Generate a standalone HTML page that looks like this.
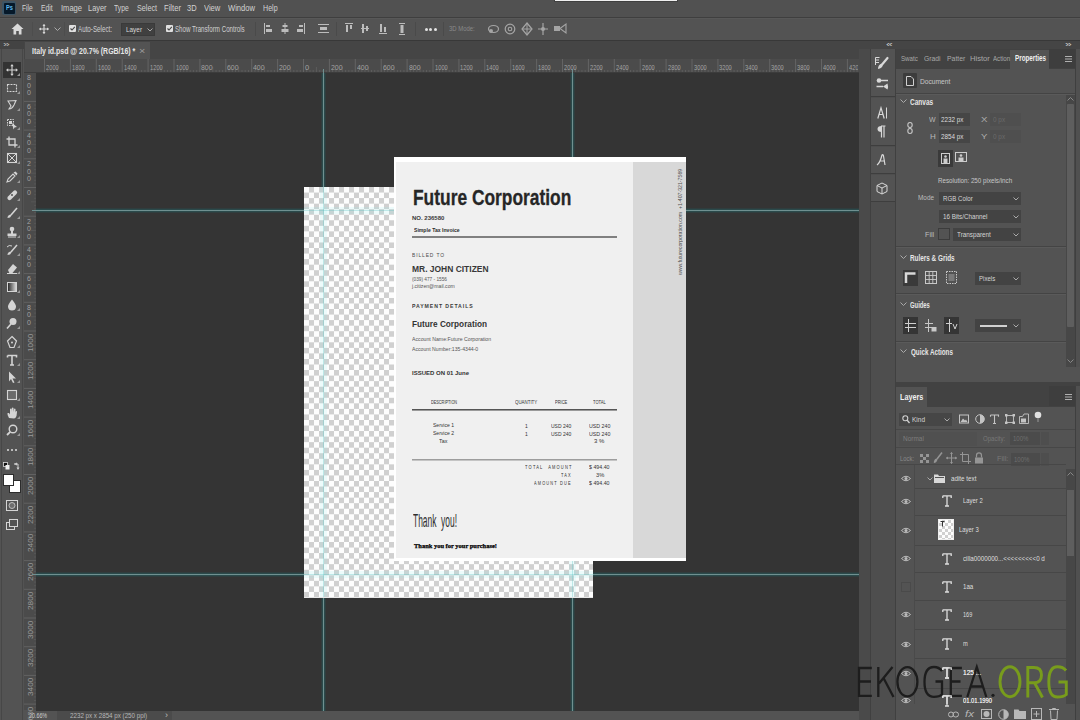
<!DOCTYPE html>
<html><head><meta charset="utf-8"><style>
*{margin:0;padding:0;box-sizing:border-box}
html,body{width:1080px;height:720px;overflow:hidden;background:#535353;font-family:"Liberation Sans",sans-serif}
.a{position:absolute}
.t{position:absolute;white-space:nowrap;line-height:1;transform-origin:0 50%}
svg{position:absolute;overflow:visible}
.checker{background:conic-gradient(#d0d0d0 25%,#fdfdfd 0 50%,#d0d0d0 0 75%,#fdfdfd 0);background-size:10px 11.1px}
</style></head><body>
<div class="a" style="left:0px;top:0px;width:1080px;height:17px;background:#515151;"></div>
<div class="a" style="left:0px;top:17px;width:1080px;height:1px;background:#3f3f3f;"></div>
<div class="a" style="left:0px;top:18px;width:1080px;height:22px;background:#535353;"></div>
<div class="a" style="left:0px;top:18px;width:1080px;height:1px;background:#585858;"></div>
<div class="a" style="left:0px;top:40px;width:1080px;height:1px;background:#383838;"></div>
<div class="a" style="left:0px;top:41px;width:1080px;height:8px;background:#454545;"></div>
<div class="a" style="left:24px;top:41px;width:835px;height:18px;background:#454545;"></div>
<div class="a" style="left:0px;top:49px;width:24px;height:671px;background:#535353;"></div>
<div class="a" style="left:0px;top:41px;width:24px;height:8px;background:#434343;"></div>
<div class="a" style="left:24px;top:59px;width:835px;height:14px;background:#4b4b4b;"></div>
<div class="a" style="left:24px;top:73px;width:12px;height:637px;background:#4b4b4b;"></div>
<div class="a" style="left:24px;top:72px;width:835px;height:1px;background:#3c3c3c;"></div>
<div class="a" style="left:36px;top:73px;width:823px;height:638px;background:#343434;"></div>
<div class="a" style="left:24px;top:711px;width:835px;height:9px;background:#535353;"></div>
<div class="a" style="left:859px;top:49px;width:11px;height:671px;background:#4a4a4a;"></div>
<div class="a" style="left:870px;top:49px;width:1px;height:671px;background:#404040;"></div>
<div class="a" style="left:871px;top:49px;width:24px;height:671px;background:#4e4e4e;"></div>
<div class="a" style="left:895px;top:49px;width:1px;height:671px;background:#404040;"></div>
<div class="a" style="left:896px;top:49px;width:184px;height:671px;background:#535353;"></div>
<div class="a" style="left:2px;top:1px;width:14px;height:14px;background:#3d5566;border-radius:2px"></div>
<div class="a" style="left:3.5px;top:2.5px;width:11px;height:11px;background:#06192a;border-radius:1px"></div>
<div class="t" style="left: 5.5px; top: 5.05px; font-size: 6.5px; color: rgb(92, 184, 240); font-weight: bold; font-family: &quot;Liberation Sans&quot;, sans-serif; transform: scaleX(0.875);">Ps</div>
<div class="t" style="left: 22px; top: 4px; font-size: 9px; color: rgb(210, 210, 210); font-weight: normal; font-family: &quot;Liberation Sans&quot;, sans-serif; transform: scaleX(0.733333);">File</div>
<div class="t" style="left: 41px; top: 4px; font-size: 9px; color: rgb(210, 210, 210); font-weight: normal; font-family: &quot;Liberation Sans&quot;, sans-serif; transform: scaleX(0.75);">Edit</div>
<div class="t" style="left: 61px; top: 4px; font-size: 9px; color: rgb(210, 210, 210); font-weight: normal; font-family: &quot;Liberation Sans&quot;, sans-serif; transform: scaleX(0.84);">Image</div>
<div class="t" style="left: 88px; top: 4px; font-size: 9px; color: rgb(210, 210, 210); font-weight: normal; font-family: &quot;Liberation Sans&quot;, sans-serif; transform: scaleX(0.826087);">Layer</div>
<div class="t" style="left: 114px; top: 4px; font-size: 9px; color: rgb(210, 210, 210); font-weight: normal; font-family: &quot;Liberation Sans&quot;, sans-serif; transform: scaleX(0.75);">Type</div>
<div class="t" style="left: 137px; top: 4px; font-size: 9px; color: rgb(210, 210, 210); font-weight: normal; font-family: &quot;Liberation Sans&quot;, sans-serif; transform: scaleX(0.8);">Select</div>
<div class="t" style="left: 164px; top: 4px; font-size: 9px; color: rgb(210, 210, 210); font-weight: normal; font-family: &quot;Liberation Sans&quot;, sans-serif; transform: scaleX(0.85);">Filter</div>
<div class="t" style="left: 187px; top: 4px; font-size: 9px; color: rgb(210, 210, 210); font-weight: normal; font-family: &quot;Liberation Sans&quot;, sans-serif; transform: scaleX(0.833333);">3D</div>
<div class="t" style="left: 204px; top: 4px; font-size: 9px; color: rgb(210, 210, 210); font-weight: normal; font-family: &quot;Liberation Sans&quot;, sans-serif; transform: scaleX(0.842105);">View</div>
<div class="t" style="left: 228px; top: 4px; font-size: 9px; color: rgb(210, 210, 210); font-weight: normal; font-family: &quot;Liberation Sans&quot;, sans-serif; transform: scaleX(0.84375);">Window</div>
<div class="t" style="left: 263px; top: 4px; font-size: 9px; color: rgb(210, 210, 210); font-weight: normal; font-family: &quot;Liberation Sans&quot;, sans-serif; transform: scaleX(0.789474);">Help</div>
<div class="a" style="left:554px;top:0px;width:124px;height:2px;background:#404040;"></div>
<div class="a" style="left:555px;top:0px;width:122px;height:1.3px;background:#f0f0f0;"></div>
<svg style="left:11px;top:23px;" width="13" height="12" viewBox="0 0 13 12"><path d="M6.5 0.5 L12.5 6 L10.5 6 L10.5 11.5 L7.8 11.5 L7.8 8 L5.2 8 L5.2 11.5 L2.5 11.5 L2.5 6 L0.5 6 Z" fill="#d9d9d9"></path></svg>
<div class="a" style="left:32px;top:22px;width:1px;height:14px;background:#4d4d4d;"></div>
<svg style="left:38.5px;top:23.5px;" width="10" height="10" viewBox="0 0 10 10"><path d="M5 0.5 V9.5 M0.5 5 H9.5" stroke="#d9d9d9" stroke-width="1.1"></path><path d="M5 0 L3.5 2 H6.5Z M5 10 L3.5 8 H6.5Z M0 5 L2 3.5 V6.5Z M10 5 L8 3.5 V6.5Z" fill="#d9d9d9"></path></svg>
<svg style="left:54px;top:27px;" width="7" height="5" viewBox="0 0 7 5"><path d="M0.5 0.5 L3.5 3.5 L6.5 0.5" stroke="#aaaaaa" fill="none" stroke-width="1"></path></svg>
<div class="a" style="left:64px;top:22px;width:1px;height:14px;background:#4d4d4d;"></div>
<div class="a" style="left:69px;top:25px;width:7px;height:7px;background:#e0e0e0;border-radius:1px"></div>
<svg style="left:69px;top:25px;" width="7" height="7" viewBox="0 0 7 7"><path d="M1.5 3.5 L3 5 L5.8 1.8" stroke="#444" fill="none" stroke-width="1.1"></path></svg>
<div class="t" style="left: 78px; top: 24.5px; font-size: 9px; color: rgb(208, 208, 208); font-weight: normal; font-family: &quot;Liberation Sans&quot;, sans-serif; transform: scaleX(0.693878);">Auto-Select:</div>
<div class="a" style="left:121px;top:23px;width:34px;height:13px;background:#404040;border:1px solid #3a3a3a"></div>
<div class="t" style="left: 126px; top: 25.5px; font-size: 8px; color: rgb(216, 216, 216); font-weight: normal; font-family: &quot;Liberation Sans&quot;, sans-serif; transform: scaleX(0.8);">Layer</div>
<svg style="left:147px;top:28px;" width="6" height="4" viewBox="0 0 6 4"><path d="M0.5 0.5 L3 3 L5.5 0.5" stroke="#aaa" fill="none" stroke-width="1"></path></svg>
<div class="a" style="left:166px;top:25px;width:7px;height:7px;background:#e0e0e0;border-radius:1px"></div>
<svg style="left:166px;top:25px;" width="7" height="7" viewBox="0 0 7 7"><path d="M1.5 3.5 L3 5 L5.8 1.8" stroke="#444" fill="none" stroke-width="1.1"></path></svg>
<div class="t" style="left: 175px; top: 24.5px; font-size: 9px; color: rgb(208, 208, 208); font-weight: normal; font-family: &quot;Liberation Sans&quot;, sans-serif; transform: scaleX(0.686275);">Show Transform Controls</div>
<div class="a" style="left:255px;top:22px;width:1px;height:14px;background:#4a4a4a;"></div>
<svg style="left:264px;top:23px;" width="11" height="12" viewBox="0 0 11 12"><rect x="0" y="0" width="1" height="11" fill="#bcbcbc"></rect><rect x="2" y="2" width="4" height="2" fill="#bcbcbc"></rect><rect x="2" y="6" width="6" height="3" fill="#bcbcbc"></rect></svg>
<svg style="left:281px;top:23px;" width="11" height="12" viewBox="0 0 11 12"><rect x="3.5" y="0" width="1" height="11" fill="#bcbcbc"></rect><rect x="1.5" y="2" width="5" height="2" fill="#bcbcbc"></rect><rect x="0.5" y="6" width="7" height="3" fill="#bcbcbc"></rect></svg>
<svg style="left:297px;top:23px;" width="11" height="12" viewBox="0 0 11 12"><rect x="7" y="0" width="1" height="11" fill="#bcbcbc"></rect><rect x="2" y="2" width="4" height="2" fill="#bcbcbc"></rect><rect x="0" y="6" width="6" height="3" fill="#bcbcbc"></rect></svg>
<svg style="left:318px;top:23px;" width="11" height="12" viewBox="0 0 11 12"><rect x="0" y="1" width="11" height="1" fill="#bcbcbc"></rect><rect x="2" y="4" width="7" height="3" fill="#bcbcbc"></rect><rect x="0" y="9" width="11" height="1" fill="#bcbcbc"></rect></svg>
<svg style="left:345px;top:23px;" width="11" height="12" viewBox="0 0 11 12"><rect x="0" y="0" width="8" height="1" fill="#bcbcbc"></rect><rect x="1" y="2" width="2" height="7" fill="#bcbcbc"></rect><rect x="5" y="2" width="2" height="4" fill="#bcbcbc"></rect></svg>
<svg style="left:361px;top:23px;" width="11" height="12" viewBox="0 0 11 12"><rect x="0" y="5" width="8" height="1" fill="#bcbcbc"></rect><rect x="1" y="1" width="2" height="9" fill="#bcbcbc"></rect><rect x="5" y="3" width="2" height="5" fill="#bcbcbc"></rect></svg>
<svg style="left:379px;top:23px;" width="11" height="12" viewBox="0 0 11 12"><rect x="0" y="10" width="8" height="1" fill="#bcbcbc"></rect><rect x="1" y="1" width="2" height="8" fill="#bcbcbc"></rect><rect x="5" y="4" width="2" height="5" fill="#bcbcbc"></rect></svg>
<svg style="left:399px;top:23px;" width="11" height="12" viewBox="0 0 11 12"><rect x="0" y="0" width="6" height="1" fill="#bcbcbc"></rect><rect x="1.5" y="2" width="3" height="8" fill="#bcbcbc"></rect><rect x="0" y="11" width="6" height="1" fill="#bcbcbc"></rect></svg>
<div class="a" style="left:336px;top:22px;width:1px;height:14px;background:#4a4a4a;"></div>
<div class="a" style="left:415px;top:22px;width:1px;height:14px;background:#4a4a4a;"></div>
<div class="a" style="left:424.5px;top:28px;width:3px;height:3px;background:#e4e4e4;border-radius:50%"></div>
<div class="a" style="left:429.0px;top:28px;width:3px;height:3px;background:#e4e4e4;border-radius:50%"></div>
<div class="a" style="left:433.5px;top:28px;width:3px;height:3px;background:#e4e4e4;border-radius:50%"></div>
<div class="a" style="left:443px;top:22px;width:1px;height:14px;background:#4a4a4a;"></div>
<div class="t" style="left: 449px; top: 25px; font-size: 8px; color: rgb(138, 138, 138); font-weight: normal; font-family: &quot;Liberation Sans&quot;, sans-serif; transform: scaleX(0.742857);">3D Mode:</div>
<svg style="left:487px;top:23px;" width="13" height="12" viewBox="0 0 13 12"><ellipse cx="6.5" cy="6" rx="5" ry="3.5" stroke="#a5a5a5" fill="none" stroke-width="1.2"></ellipse><circle cx="4" cy="8" r="2" fill="#a5a5a5"></circle></svg>
<svg style="left:504px;top:23px;" width="12" height="12" viewBox="0 0 12 12"><circle cx="6" cy="6" r="4.8" stroke="#a5a5a5" fill="none" stroke-width="1.2"></circle><circle cx="6" cy="6" r="1.8" stroke="#a5a5a5" fill="none" stroke-width="1.1"></circle></svg>
<svg style="left:521px;top:22px;" width="12" height="14" viewBox="0 0 12 14"><path d="M6 1 L11 7 L6 13 L1 7Z" stroke="#a5a5a5" fill="none" stroke-width="1.2"></path><path d="M6 1V13M1 7H11" stroke="#a5a5a5" stroke-width="1"></path></svg>
<svg style="left:537px;top:22px;" width="12" height="14" viewBox="0 0 12 14"><path d="M6 1V13M1 7H11" stroke="#a5a5a5" stroke-width="1.2"></path><circle cx="6" cy="7" r="2" fill="#a5a5a5"></circle></svg>
<svg style="left:554px;top:23px;" width="13" height="11" viewBox="0 0 13 11"><rect x="0" y="3" width="6" height="5" fill="#a5a5a5"></rect><path d="M6 5.5 L12 1 V10Z" stroke="#a5a5a5" fill="none" stroke-width="1.1"></path></svg>
<div class="a" style="left:25px;top:42px;width:125px;height:17px;background:#535353;"></div>
<div class="t" style="left: 32px; top: 46.5px; font-size: 9px; color: rgb(230, 230, 230); font-weight: bold; font-family: &quot;Liberation Sans&quot;, sans-serif; transform: scaleX(0.774436);">Italy id.psd @ 20.7% (RGB/16) *</div>
<div class="t" style="left: 139px; top: 46.5px; font-size: 9px; color: rgb(154, 154, 154); font-weight: normal; font-family: &quot;Liberation Sans&quot;, sans-serif; transform: scaleX(1.2);">×</div>
<div class="t" style="left: 3px; top: 41px; font-size: 8px; color: rgb(189, 189, 189); font-weight: normal; font-family: &quot;Liberation Sans&quot;, sans-serif; transform: scaleX(1.5);">»</div>
<svg style="left:24px;top:59px;" width="835" height="14" viewBox="0 0 835 14"><rect x="20.0" y="0" width="1" height="13" fill="#646464"></rect><rect x="23.2" y="11" width="1" height="2" fill="#5c5c5c"></rect><rect x="26.5" y="11" width="1" height="2" fill="#5c5c5c"></rect><rect x="29.7" y="11" width="1" height="2" fill="#5c5c5c"></rect><rect x="33.0" y="8" width="1" height="5" fill="#5c5c5c"></rect><rect x="36.2" y="11" width="1" height="2" fill="#5c5c5c"></rect><rect x="39.4" y="11" width="1" height="2" fill="#5c5c5c"></rect><rect x="42.7" y="11" width="1" height="2" fill="#5c5c5c"></rect><rect x="45.9" y="0" width="1" height="13" fill="#646464"></rect><rect x="49.1" y="11" width="1" height="2" fill="#5c5c5c"></rect><rect x="52.4" y="11" width="1" height="2" fill="#5c5c5c"></rect><rect x="55.6" y="11" width="1" height="2" fill="#5c5c5c"></rect><rect x="58.9" y="8" width="1" height="5" fill="#5c5c5c"></rect><rect x="62.1" y="11" width="1" height="2" fill="#5c5c5c"></rect><rect x="65.3" y="11" width="1" height="2" fill="#5c5c5c"></rect><rect x="68.6" y="11" width="1" height="2" fill="#5c5c5c"></rect><rect x="71.8" y="0" width="1" height="13" fill="#646464"></rect><rect x="75.0" y="11" width="1" height="2" fill="#5c5c5c"></rect><rect x="78.3" y="11" width="1" height="2" fill="#5c5c5c"></rect><rect x="81.5" y="11" width="1" height="2" fill="#5c5c5c"></rect><rect x="84.8" y="8" width="1" height="5" fill="#5c5c5c"></rect><rect x="88.0" y="11" width="1" height="2" fill="#5c5c5c"></rect><rect x="91.2" y="11" width="1" height="2" fill="#5c5c5c"></rect><rect x="94.5" y="11" width="1" height="2" fill="#5c5c5c"></rect><rect x="97.7" y="0" width="1" height="13" fill="#646464"></rect><rect x="100.9" y="11" width="1" height="2" fill="#5c5c5c"></rect><rect x="104.2" y="11" width="1" height="2" fill="#5c5c5c"></rect><rect x="107.4" y="11" width="1" height="2" fill="#5c5c5c"></rect><rect x="110.7" y="8" width="1" height="5" fill="#5c5c5c"></rect><rect x="113.9" y="11" width="1" height="2" fill="#5c5c5c"></rect><rect x="117.1" y="11" width="1" height="2" fill="#5c5c5c"></rect><rect x="120.4" y="11" width="1" height="2" fill="#5c5c5c"></rect><rect x="123.6" y="0" width="1" height="13" fill="#646464"></rect><rect x="126.8" y="11" width="1" height="2" fill="#5c5c5c"></rect><rect x="130.1" y="11" width="1" height="2" fill="#5c5c5c"></rect><rect x="133.3" y="11" width="1" height="2" fill="#5c5c5c"></rect><rect x="136.6" y="8" width="1" height="5" fill="#5c5c5c"></rect><rect x="139.8" y="11" width="1" height="2" fill="#5c5c5c"></rect><rect x="143.0" y="11" width="1" height="2" fill="#5c5c5c"></rect><rect x="146.3" y="11" width="1" height="2" fill="#5c5c5c"></rect><rect x="149.5" y="0" width="1" height="13" fill="#646464"></rect><rect x="152.7" y="11" width="1" height="2" fill="#5c5c5c"></rect><rect x="156.0" y="11" width="1" height="2" fill="#5c5c5c"></rect><rect x="159.2" y="11" width="1" height="2" fill="#5c5c5c"></rect><rect x="162.4" y="8" width="1" height="5" fill="#5c5c5c"></rect><rect x="165.7" y="11" width="1" height="2" fill="#5c5c5c"></rect><rect x="168.9" y="11" width="1" height="2" fill="#5c5c5c"></rect><rect x="172.2" y="11" width="1" height="2" fill="#5c5c5c"></rect><rect x="175.4" y="0" width="1" height="13" fill="#646464"></rect><rect x="178.6" y="11" width="1" height="2" fill="#5c5c5c"></rect><rect x="181.9" y="11" width="1" height="2" fill="#5c5c5c"></rect><rect x="185.1" y="11" width="1" height="2" fill="#5c5c5c"></rect><rect x="188.3" y="8" width="1" height="5" fill="#5c5c5c"></rect><rect x="191.6" y="11" width="1" height="2" fill="#5c5c5c"></rect><rect x="194.8" y="11" width="1" height="2" fill="#5c5c5c"></rect><rect x="198.1" y="11" width="1" height="2" fill="#5c5c5c"></rect><rect x="201.3" y="0" width="1" height="13" fill="#646464"></rect><rect x="204.5" y="11" width="1" height="2" fill="#5c5c5c"></rect><rect x="207.8" y="11" width="1" height="2" fill="#5c5c5c"></rect><rect x="211.0" y="11" width="1" height="2" fill="#5c5c5c"></rect><rect x="214.2" y="8" width="1" height="5" fill="#5c5c5c"></rect><rect x="217.5" y="11" width="1" height="2" fill="#5c5c5c"></rect><rect x="220.7" y="11" width="1" height="2" fill="#5c5c5c"></rect><rect x="224.0" y="11" width="1" height="2" fill="#5c5c5c"></rect><rect x="227.2" y="0" width="1" height="13" fill="#646464"></rect><rect x="230.4" y="11" width="1" height="2" fill="#5c5c5c"></rect><rect x="233.7" y="11" width="1" height="2" fill="#5c5c5c"></rect><rect x="236.9" y="11" width="1" height="2" fill="#5c5c5c"></rect><rect x="240.1" y="8" width="1" height="5" fill="#5c5c5c"></rect><rect x="243.4" y="11" width="1" height="2" fill="#5c5c5c"></rect><rect x="246.6" y="11" width="1" height="2" fill="#5c5c5c"></rect><rect x="249.9" y="11" width="1" height="2" fill="#5c5c5c"></rect><rect x="253.1" y="0" width="1" height="13" fill="#646464"></rect><rect x="256.3" y="11" width="1" height="2" fill="#5c5c5c"></rect><rect x="259.6" y="11" width="1" height="2" fill="#5c5c5c"></rect><rect x="262.8" y="11" width="1" height="2" fill="#5c5c5c"></rect><rect x="266.1" y="8" width="1" height="5" fill="#5c5c5c"></rect><rect x="269.3" y="11" width="1" height="2" fill="#5c5c5c"></rect><rect x="272.5" y="11" width="1" height="2" fill="#5c5c5c"></rect><rect x="275.8" y="11" width="1" height="2" fill="#5c5c5c"></rect><rect x="279.0" y="0" width="1" height="13" fill="#646464"></rect><rect x="282.2" y="11" width="1" height="2" fill="#5c5c5c"></rect><rect x="285.5" y="11" width="1" height="2" fill="#5c5c5c"></rect><rect x="288.7" y="11" width="1" height="2" fill="#5c5c5c"></rect><rect x="291.9" y="8" width="1" height="5" fill="#5c5c5c"></rect><rect x="295.2" y="11" width="1" height="2" fill="#5c5c5c"></rect><rect x="298.4" y="11" width="1" height="2" fill="#5c5c5c"></rect><rect x="301.7" y="11" width="1" height="2" fill="#5c5c5c"></rect><rect x="304.9" y="0" width="1" height="13" fill="#646464"></rect><rect x="308.1" y="11" width="1" height="2" fill="#5c5c5c"></rect><rect x="311.4" y="11" width="1" height="2" fill="#5c5c5c"></rect><rect x="314.6" y="11" width="1" height="2" fill="#5c5c5c"></rect><rect x="317.8" y="8" width="1" height="5" fill="#5c5c5c"></rect><rect x="321.1" y="11" width="1" height="2" fill="#5c5c5c"></rect><rect x="324.3" y="11" width="1" height="2" fill="#5c5c5c"></rect><rect x="327.6" y="11" width="1" height="2" fill="#5c5c5c"></rect><rect x="330.8" y="0" width="1" height="13" fill="#646464"></rect><rect x="334.0" y="11" width="1" height="2" fill="#5c5c5c"></rect><rect x="337.3" y="11" width="1" height="2" fill="#5c5c5c"></rect><rect x="340.5" y="11" width="1" height="2" fill="#5c5c5c"></rect><rect x="343.8" y="8" width="1" height="5" fill="#5c5c5c"></rect><rect x="347.0" y="11" width="1" height="2" fill="#5c5c5c"></rect><rect x="350.2" y="11" width="1" height="2" fill="#5c5c5c"></rect><rect x="353.5" y="11" width="1" height="2" fill="#5c5c5c"></rect><rect x="356.7" y="0" width="1" height="13" fill="#646464"></rect><rect x="359.9" y="11" width="1" height="2" fill="#5c5c5c"></rect><rect x="363.2" y="11" width="1" height="2" fill="#5c5c5c"></rect><rect x="366.4" y="11" width="1" height="2" fill="#5c5c5c"></rect><rect x="369.6" y="8" width="1" height="5" fill="#5c5c5c"></rect><rect x="372.9" y="11" width="1" height="2" fill="#5c5c5c"></rect><rect x="376.1" y="11" width="1" height="2" fill="#5c5c5c"></rect><rect x="379.4" y="11" width="1" height="2" fill="#5c5c5c"></rect><rect x="382.6" y="0" width="1" height="13" fill="#646464"></rect><rect x="385.8" y="11" width="1" height="2" fill="#5c5c5c"></rect><rect x="389.1" y="11" width="1" height="2" fill="#5c5c5c"></rect><rect x="392.3" y="11" width="1" height="2" fill="#5c5c5c"></rect><rect x="395.6" y="8" width="1" height="5" fill="#5c5c5c"></rect><rect x="398.8" y="11" width="1" height="2" fill="#5c5c5c"></rect><rect x="402.0" y="11" width="1" height="2" fill="#5c5c5c"></rect><rect x="405.3" y="11" width="1" height="2" fill="#5c5c5c"></rect><rect x="408.5" y="0" width="1" height="13" fill="#646464"></rect><rect x="411.7" y="11" width="1" height="2" fill="#5c5c5c"></rect><rect x="415.0" y="11" width="1" height="2" fill="#5c5c5c"></rect><rect x="418.2" y="11" width="1" height="2" fill="#5c5c5c"></rect><rect x="421.4" y="8" width="1" height="5" fill="#5c5c5c"></rect><rect x="424.7" y="11" width="1" height="2" fill="#5c5c5c"></rect><rect x="427.9" y="11" width="1" height="2" fill="#5c5c5c"></rect><rect x="431.2" y="11" width="1" height="2" fill="#5c5c5c"></rect><rect x="434.4" y="0" width="1" height="13" fill="#646464"></rect><rect x="437.6" y="11" width="1" height="2" fill="#5c5c5c"></rect><rect x="440.9" y="11" width="1" height="2" fill="#5c5c5c"></rect><rect x="444.1" y="11" width="1" height="2" fill="#5c5c5c"></rect><rect x="447.3" y="8" width="1" height="5" fill="#5c5c5c"></rect><rect x="450.6" y="11" width="1" height="2" fill="#5c5c5c"></rect><rect x="453.8" y="11" width="1" height="2" fill="#5c5c5c"></rect><rect x="457.1" y="11" width="1" height="2" fill="#5c5c5c"></rect><rect x="460.3" y="0" width="1" height="13" fill="#646464"></rect><rect x="463.5" y="11" width="1" height="2" fill="#5c5c5c"></rect><rect x="466.8" y="11" width="1" height="2" fill="#5c5c5c"></rect><rect x="470.0" y="11" width="1" height="2" fill="#5c5c5c"></rect><rect x="473.2" y="8" width="1" height="5" fill="#5c5c5c"></rect><rect x="476.5" y="11" width="1" height="2" fill="#5c5c5c"></rect><rect x="479.7" y="11" width="1" height="2" fill="#5c5c5c"></rect><rect x="483.0" y="11" width="1" height="2" fill="#5c5c5c"></rect><rect x="486.2" y="0" width="1" height="13" fill="#646464"></rect><rect x="489.4" y="11" width="1" height="2" fill="#5c5c5c"></rect><rect x="492.7" y="11" width="1" height="2" fill="#5c5c5c"></rect><rect x="495.9" y="11" width="1" height="2" fill="#5c5c5c"></rect><rect x="499.1" y="8" width="1" height="5" fill="#5c5c5c"></rect><rect x="502.4" y="11" width="1" height="2" fill="#5c5c5c"></rect><rect x="505.6" y="11" width="1" height="2" fill="#5c5c5c"></rect><rect x="508.9" y="11" width="1" height="2" fill="#5c5c5c"></rect><rect x="512.1" y="0" width="1" height="13" fill="#646464"></rect><rect x="515.3" y="11" width="1" height="2" fill="#5c5c5c"></rect><rect x="518.6" y="11" width="1" height="2" fill="#5c5c5c"></rect><rect x="521.8" y="11" width="1" height="2" fill="#5c5c5c"></rect><rect x="525.1" y="8" width="1" height="5" fill="#5c5c5c"></rect><rect x="528.3" y="11" width="1" height="2" fill="#5c5c5c"></rect><rect x="531.5" y="11" width="1" height="2" fill="#5c5c5c"></rect><rect x="534.8" y="11" width="1" height="2" fill="#5c5c5c"></rect><rect x="538.0" y="0" width="1" height="13" fill="#646464"></rect><rect x="541.2" y="11" width="1" height="2" fill="#5c5c5c"></rect><rect x="544.5" y="11" width="1" height="2" fill="#5c5c5c"></rect><rect x="547.7" y="11" width="1" height="2" fill="#5c5c5c"></rect><rect x="551.0" y="8" width="1" height="5" fill="#5c5c5c"></rect><rect x="554.2" y="11" width="1" height="2" fill="#5c5c5c"></rect><rect x="557.4" y="11" width="1" height="2" fill="#5c5c5c"></rect><rect x="560.7" y="11" width="1" height="2" fill="#5c5c5c"></rect><rect x="563.9" y="0" width="1" height="13" fill="#646464"></rect><rect x="567.1" y="11" width="1" height="2" fill="#5c5c5c"></rect><rect x="570.4" y="11" width="1" height="2" fill="#5c5c5c"></rect><rect x="573.6" y="11" width="1" height="2" fill="#5c5c5c"></rect><rect x="576.9" y="8" width="1" height="5" fill="#5c5c5c"></rect><rect x="580.1" y="11" width="1" height="2" fill="#5c5c5c"></rect><rect x="583.3" y="11" width="1" height="2" fill="#5c5c5c"></rect><rect x="586.6" y="11" width="1" height="2" fill="#5c5c5c"></rect><rect x="589.8" y="0" width="1" height="13" fill="#646464"></rect><rect x="593.0" y="11" width="1" height="2" fill="#5c5c5c"></rect><rect x="596.3" y="11" width="1" height="2" fill="#5c5c5c"></rect><rect x="599.5" y="11" width="1" height="2" fill="#5c5c5c"></rect><rect x="602.8" y="8" width="1" height="5" fill="#5c5c5c"></rect><rect x="606.0" y="11" width="1" height="2" fill="#5c5c5c"></rect><rect x="609.2" y="11" width="1" height="2" fill="#5c5c5c"></rect><rect x="612.5" y="11" width="1" height="2" fill="#5c5c5c"></rect><rect x="615.7" y="0" width="1" height="13" fill="#646464"></rect><rect x="618.9" y="11" width="1" height="2" fill="#5c5c5c"></rect><rect x="622.2" y="11" width="1" height="2" fill="#5c5c5c"></rect><rect x="625.4" y="11" width="1" height="2" fill="#5c5c5c"></rect><rect x="628.7" y="8" width="1" height="5" fill="#5c5c5c"></rect><rect x="631.9" y="11" width="1" height="2" fill="#5c5c5c"></rect><rect x="635.1" y="11" width="1" height="2" fill="#5c5c5c"></rect><rect x="638.4" y="11" width="1" height="2" fill="#5c5c5c"></rect><rect x="641.6" y="0" width="1" height="13" fill="#646464"></rect><rect x="644.8" y="11" width="1" height="2" fill="#5c5c5c"></rect><rect x="648.1" y="11" width="1" height="2" fill="#5c5c5c"></rect><rect x="651.3" y="11" width="1" height="2" fill="#5c5c5c"></rect><rect x="654.5" y="8" width="1" height="5" fill="#5c5c5c"></rect><rect x="657.8" y="11" width="1" height="2" fill="#5c5c5c"></rect><rect x="661.0" y="11" width="1" height="2" fill="#5c5c5c"></rect><rect x="664.3" y="11" width="1" height="2" fill="#5c5c5c"></rect><rect x="667.5" y="0" width="1" height="13" fill="#646464"></rect><rect x="670.7" y="11" width="1" height="2" fill="#5c5c5c"></rect><rect x="674.0" y="11" width="1" height="2" fill="#5c5c5c"></rect><rect x="677.2" y="11" width="1" height="2" fill="#5c5c5c"></rect><rect x="680.5" y="8" width="1" height="5" fill="#5c5c5c"></rect><rect x="683.7" y="11" width="1" height="2" fill="#5c5c5c"></rect><rect x="686.9" y="11" width="1" height="2" fill="#5c5c5c"></rect><rect x="690.2" y="11" width="1" height="2" fill="#5c5c5c"></rect><rect x="693.4" y="0" width="1" height="13" fill="#646464"></rect><rect x="696.6" y="11" width="1" height="2" fill="#5c5c5c"></rect><rect x="699.9" y="11" width="1" height="2" fill="#5c5c5c"></rect><rect x="703.1" y="11" width="1" height="2" fill="#5c5c5c"></rect><rect x="706.4" y="8" width="1" height="5" fill="#5c5c5c"></rect><rect x="709.6" y="11" width="1" height="2" fill="#5c5c5c"></rect><rect x="712.8" y="11" width="1" height="2" fill="#5c5c5c"></rect><rect x="716.1" y="11" width="1" height="2" fill="#5c5c5c"></rect><rect x="719.3" y="0" width="1" height="13" fill="#646464"></rect><rect x="722.5" y="11" width="1" height="2" fill="#5c5c5c"></rect><rect x="725.8" y="11" width="1" height="2" fill="#5c5c5c"></rect><rect x="729.0" y="11" width="1" height="2" fill="#5c5c5c"></rect><rect x="732.2" y="8" width="1" height="5" fill="#5c5c5c"></rect><rect x="735.5" y="11" width="1" height="2" fill="#5c5c5c"></rect><rect x="738.7" y="11" width="1" height="2" fill="#5c5c5c"></rect><rect x="742.0" y="11" width="1" height="2" fill="#5c5c5c"></rect><rect x="745.2" y="0" width="1" height="13" fill="#646464"></rect><rect x="748.4" y="11" width="1" height="2" fill="#5c5c5c"></rect><rect x="751.7" y="11" width="1" height="2" fill="#5c5c5c"></rect><rect x="754.9" y="11" width="1" height="2" fill="#5c5c5c"></rect><rect x="758.2" y="8" width="1" height="5" fill="#5c5c5c"></rect><rect x="761.4" y="11" width="1" height="2" fill="#5c5c5c"></rect><rect x="764.6" y="11" width="1" height="2" fill="#5c5c5c"></rect><rect x="767.9" y="11" width="1" height="2" fill="#5c5c5c"></rect><rect x="771.1" y="0" width="1" height="13" fill="#646464"></rect><rect x="774.3" y="11" width="1" height="2" fill="#5c5c5c"></rect><rect x="777.6" y="11" width="1" height="2" fill="#5c5c5c"></rect><rect x="780.8" y="11" width="1" height="2" fill="#5c5c5c"></rect><rect x="784.0" y="8" width="1" height="5" fill="#5c5c5c"></rect><rect x="787.3" y="11" width="1" height="2" fill="#5c5c5c"></rect><rect x="790.5" y="11" width="1" height="2" fill="#5c5c5c"></rect><rect x="793.8" y="11" width="1" height="2" fill="#5c5c5c"></rect><rect x="797.0" y="0" width="1" height="13" fill="#646464"></rect><rect x="800.2" y="11" width="1" height="2" fill="#5c5c5c"></rect><rect x="803.5" y="11" width="1" height="2" fill="#5c5c5c"></rect><rect x="806.7" y="11" width="1" height="2" fill="#5c5c5c"></rect><rect x="810.0" y="8" width="1" height="5" fill="#5c5c5c"></rect><rect x="813.2" y="11" width="1" height="2" fill="#5c5c5c"></rect><rect x="816.4" y="11" width="1" height="2" fill="#5c5c5c"></rect><rect x="819.7" y="11" width="1" height="2" fill="#5c5c5c"></rect><rect x="822.9" y="0" width="1" height="13" fill="#646464"></rect><rect x="826.1" y="11" width="1" height="2" fill="#5c5c5c"></rect><rect x="829.4" y="11" width="1" height="2" fill="#5c5c5c"></rect><rect x="832.6" y="11" width="1" height="2" fill="#5c5c5c"></rect></svg>
<div class="a" style="left:0;top:0;width:858px;height:720px;overflow:hidden">
<div class="t" style="left: 46px; top: 64.05px; font-size: 7.5px; color: rgb(162, 162, 162); font-weight: normal; font-family: &quot;Liberation Sans&quot;, sans-serif; transform: scaleX(0.764706);">2000</div>
<div class="t" style="left: 71.9px; top: 64.05px; font-size: 7.5px; color: rgb(162, 162, 162); font-weight: normal; font-family: &quot;Liberation Sans&quot;, sans-serif; transform: scaleX(0.764706);">1800</div>
<div class="t" style="left: 97.8px; top: 64.05px; font-size: 7.5px; color: rgb(162, 162, 162); font-weight: normal; font-family: &quot;Liberation Sans&quot;, sans-serif; transform: scaleX(0.764706);">1600</div>
<div class="t" style="left: 123.7px; top: 64.05px; font-size: 7.5px; color: rgb(162, 162, 162); font-weight: normal; font-family: &quot;Liberation Sans&quot;, sans-serif; transform: scaleX(0.764706);">1400</div>
<div class="t" style="left: 149.6px; top: 64.05px; font-size: 7.5px; color: rgb(162, 162, 162); font-weight: normal; font-family: &quot;Liberation Sans&quot;, sans-serif; transform: scaleX(0.764706);">1200</div>
<div class="t" style="left: 175.5px; top: 64.05px; font-size: 7.5px; color: rgb(162, 162, 162); font-weight: normal; font-family: &quot;Liberation Sans&quot;, sans-serif; transform: scaleX(0.764706);">1000</div>
<div class="t" style="left: 201.4px; top: 64.05px; font-size: 7.5px; color: rgb(162, 162, 162); font-weight: normal; font-family: &quot;Liberation Sans&quot;, sans-serif; transform: scaleX(0.923077);">800</div>
<div class="t" style="left: 227.3px; top: 64.05px; font-size: 7.5px; color: rgb(162, 162, 162); font-weight: normal; font-family: &quot;Liberation Sans&quot;, sans-serif; transform: scaleX(0.923077);">600</div>
<div class="t" style="left: 253.2px; top: 64.05px; font-size: 7.5px; color: rgb(162, 162, 162); font-weight: normal; font-family: &quot;Liberation Sans&quot;, sans-serif; transform: scaleX(0.923077);">400</div>
<div class="t" style="left: 279.1px; top: 64.05px; font-size: 7.5px; color: rgb(162, 162, 162); font-weight: normal; font-family: &quot;Liberation Sans&quot;, sans-serif; transform: scaleX(0.923077);">200</div>
<div class="t" style="left: 305px; top: 64.05px; font-size: 7.5px; color: rgb(162, 162, 162); font-weight: normal; font-family: &quot;Liberation Sans&quot;, sans-serif; transform: scaleX(1);">0</div>
<div class="t" style="left: 330.9px; top: 64.05px; font-size: 7.5px; color: rgb(162, 162, 162); font-weight: normal; font-family: &quot;Liberation Sans&quot;, sans-serif; transform: scaleX(0.923077);">200</div>
<div class="t" style="left: 356.8px; top: 64.05px; font-size: 7.5px; color: rgb(162, 162, 162); font-weight: normal; font-family: &quot;Liberation Sans&quot;, sans-serif; transform: scaleX(0.923077);">400</div>
<div class="t" style="left: 382.7px; top: 64.05px; font-size: 7.5px; color: rgb(162, 162, 162); font-weight: normal; font-family: &quot;Liberation Sans&quot;, sans-serif; transform: scaleX(0.923077);">600</div>
<div class="t" style="left: 408.6px; top: 64.05px; font-size: 7.5px; color: rgb(162, 162, 162); font-weight: normal; font-family: &quot;Liberation Sans&quot;, sans-serif; transform: scaleX(0.923077);">800</div>
<div class="t" style="left: 434.5px; top: 64.05px; font-size: 7.5px; color: rgb(162, 162, 162); font-weight: normal; font-family: &quot;Liberation Sans&quot;, sans-serif; transform: scaleX(0.764706);">1000</div>
<div class="t" style="left: 460.4px; top: 64.05px; font-size: 7.5px; color: rgb(162, 162, 162); font-weight: normal; font-family: &quot;Liberation Sans&quot;, sans-serif; transform: scaleX(0.764706);">1200</div>
<div class="t" style="left: 486.3px; top: 64.05px; font-size: 7.5px; color: rgb(162, 162, 162); font-weight: normal; font-family: &quot;Liberation Sans&quot;, sans-serif; transform: scaleX(0.764706);">1400</div>
<div class="t" style="left: 512.2px; top: 64.05px; font-size: 7.5px; color: rgb(162, 162, 162); font-weight: normal; font-family: &quot;Liberation Sans&quot;, sans-serif; transform: scaleX(0.764706);">1600</div>
<div class="t" style="left: 538.1px; top: 64.05px; font-size: 7.5px; color: rgb(162, 162, 162); font-weight: normal; font-family: &quot;Liberation Sans&quot;, sans-serif; transform: scaleX(0.764706);">1800</div>
<div class="t" style="left: 564px; top: 64.05px; font-size: 7.5px; color: rgb(162, 162, 162); font-weight: normal; font-family: &quot;Liberation Sans&quot;, sans-serif; transform: scaleX(0.764706);">2000</div>
<div class="t" style="left: 589.9px; top: 64.05px; font-size: 7.5px; color: rgb(162, 162, 162); font-weight: normal; font-family: &quot;Liberation Sans&quot;, sans-serif; transform: scaleX(0.764706);">2200</div>
<div class="t" style="left: 615.8px; top: 64.05px; font-size: 7.5px; color: rgb(162, 162, 162); font-weight: normal; font-family: &quot;Liberation Sans&quot;, sans-serif; transform: scaleX(0.764706);">2400</div>
<div class="t" style="left: 641.7px; top: 64.05px; font-size: 7.5px; color: rgb(162, 162, 162); font-weight: normal; font-family: &quot;Liberation Sans&quot;, sans-serif; transform: scaleX(0.764706);">2600</div>
<div class="t" style="left: 667.6px; top: 64.05px; font-size: 7.5px; color: rgb(162, 162, 162); font-weight: normal; font-family: &quot;Liberation Sans&quot;, sans-serif; transform: scaleX(0.764706);">2800</div>
<div class="t" style="left: 693.5px; top: 64.05px; font-size: 7.5px; color: rgb(162, 162, 162); font-weight: normal; font-family: &quot;Liberation Sans&quot;, sans-serif; transform: scaleX(0.764706);">3000</div>
<div class="t" style="left: 719.4px; top: 64.05px; font-size: 7.5px; color: rgb(162, 162, 162); font-weight: normal; font-family: &quot;Liberation Sans&quot;, sans-serif; transform: scaleX(0.764706);">3200</div>
<div class="t" style="left: 745.3px; top: 64.05px; font-size: 7.5px; color: rgb(162, 162, 162); font-weight: normal; font-family: &quot;Liberation Sans&quot;, sans-serif; transform: scaleX(0.764706);">3400</div>
<div class="t" style="left: 771.2px; top: 64.05px; font-size: 7.5px; color: rgb(162, 162, 162); font-weight: normal; font-family: &quot;Liberation Sans&quot;, sans-serif; transform: scaleX(0.764706);">3600</div>
<div class="t" style="left: 797.1px; top: 64.05px; font-size: 7.5px; color: rgb(162, 162, 162); font-weight: normal; font-family: &quot;Liberation Sans&quot;, sans-serif; transform: scaleX(0.764706);">3800</div>
<div class="t" style="left: 823px; top: 64.05px; font-size: 7.5px; color: rgb(162, 162, 162); font-weight: normal; font-family: &quot;Liberation Sans&quot;, sans-serif; transform: scaleX(0.764706);">4000</div>
<div class="t" style="left: 848.9px; top: 64.05px; font-size: 7.5px; color: rgb(162, 162, 162); font-weight: normal; font-family: &quot;Liberation Sans&quot;, sans-serif; transform: scaleX(0.764706);">4200</div>
</div>
<svg style="left:24px;top:73px;" width="12" height="637" viewBox="0 0 12 637"><rect x="0" y="27.9" width="12" height="1" fill="#626262"></rect><rect x="10" y="31.5" width="2" height="1" fill="#565656"></rect><rect x="10" y="35.1" width="2" height="1" fill="#565656"></rect><rect x="10" y="38.7" width="2" height="1" fill="#565656"></rect><rect x="7" y="42.2" width="5" height="1" fill="#565656"></rect><rect x="10" y="45.8" width="2" height="1" fill="#565656"></rect><rect x="10" y="49.4" width="2" height="1" fill="#565656"></rect><rect x="10" y="53.0" width="2" height="1" fill="#565656"></rect><rect x="0" y="56.6" width="12" height="1" fill="#626262"></rect><rect x="10" y="60.2" width="2" height="1" fill="#565656"></rect><rect x="10" y="63.8" width="2" height="1" fill="#565656"></rect><rect x="10" y="67.4" width="2" height="1" fill="#565656"></rect><rect x="7" y="70.9" width="5" height="1" fill="#565656"></rect><rect x="10" y="74.5" width="2" height="1" fill="#565656"></rect><rect x="10" y="78.1" width="2" height="1" fill="#565656"></rect><rect x="10" y="81.7" width="2" height="1" fill="#565656"></rect><rect x="0" y="85.3" width="12" height="1" fill="#626262"></rect><rect x="10" y="88.9" width="2" height="1" fill="#565656"></rect><rect x="10" y="92.5" width="2" height="1" fill="#565656"></rect><rect x="10" y="96.1" width="2" height="1" fill="#565656"></rect><rect x="7" y="99.7" width="5" height="1" fill="#565656"></rect><rect x="10" y="103.2" width="2" height="1" fill="#565656"></rect><rect x="10" y="106.8" width="2" height="1" fill="#565656"></rect><rect x="10" y="110.4" width="2" height="1" fill="#565656"></rect><rect x="0" y="114.0" width="12" height="1" fill="#626262"></rect><rect x="10" y="117.6" width="2" height="1" fill="#565656"></rect><rect x="10" y="121.2" width="2" height="1" fill="#565656"></rect><rect x="10" y="124.8" width="2" height="1" fill="#565656"></rect><rect x="7" y="128.3" width="5" height="1" fill="#565656"></rect><rect x="10" y="131.9" width="2" height="1" fill="#565656"></rect><rect x="10" y="135.5" width="2" height="1" fill="#565656"></rect><rect x="10" y="139.1" width="2" height="1" fill="#565656"></rect><rect x="0" y="142.7" width="12" height="1" fill="#626262"></rect><rect x="10" y="146.3" width="2" height="1" fill="#565656"></rect><rect x="10" y="149.9" width="2" height="1" fill="#565656"></rect><rect x="10" y="153.5" width="2" height="1" fill="#565656"></rect><rect x="7" y="157.0" width="5" height="1" fill="#565656"></rect><rect x="10" y="160.6" width="2" height="1" fill="#565656"></rect><rect x="10" y="164.2" width="2" height="1" fill="#565656"></rect><rect x="10" y="167.8" width="2" height="1" fill="#565656"></rect><rect x="0" y="171.4" width="12" height="1" fill="#626262"></rect><rect x="10" y="175.0" width="2" height="1" fill="#565656"></rect><rect x="10" y="178.6" width="2" height="1" fill="#565656"></rect><rect x="10" y="182.2" width="2" height="1" fill="#565656"></rect><rect x="7" y="185.8" width="5" height="1" fill="#565656"></rect><rect x="10" y="189.3" width="2" height="1" fill="#565656"></rect><rect x="10" y="192.9" width="2" height="1" fill="#565656"></rect><rect x="10" y="196.5" width="2" height="1" fill="#565656"></rect><rect x="0" y="200.1" width="12" height="1" fill="#626262"></rect><rect x="10" y="203.7" width="2" height="1" fill="#565656"></rect><rect x="10" y="207.3" width="2" height="1" fill="#565656"></rect><rect x="10" y="210.9" width="2" height="1" fill="#565656"></rect><rect x="7" y="214.5" width="5" height="1" fill="#565656"></rect><rect x="10" y="218.0" width="2" height="1" fill="#565656"></rect><rect x="10" y="221.6" width="2" height="1" fill="#565656"></rect><rect x="10" y="225.2" width="2" height="1" fill="#565656"></rect><rect x="0" y="228.8" width="12" height="1" fill="#626262"></rect><rect x="10" y="232.4" width="2" height="1" fill="#565656"></rect><rect x="10" y="236.0" width="2" height="1" fill="#565656"></rect><rect x="10" y="239.6" width="2" height="1" fill="#565656"></rect><rect x="7" y="243.2" width="5" height="1" fill="#565656"></rect><rect x="10" y="246.7" width="2" height="1" fill="#565656"></rect><rect x="10" y="250.3" width="2" height="1" fill="#565656"></rect><rect x="10" y="253.9" width="2" height="1" fill="#565656"></rect><rect x="0" y="257.5" width="12" height="1" fill="#626262"></rect><rect x="10" y="261.1" width="2" height="1" fill="#565656"></rect><rect x="10" y="264.7" width="2" height="1" fill="#565656"></rect><rect x="10" y="268.3" width="2" height="1" fill="#565656"></rect><rect x="7" y="271.9" width="5" height="1" fill="#565656"></rect><rect x="10" y="275.4" width="2" height="1" fill="#565656"></rect><rect x="10" y="279.0" width="2" height="1" fill="#565656"></rect><rect x="10" y="282.6" width="2" height="1" fill="#565656"></rect><rect x="0" y="286.2" width="12" height="1" fill="#626262"></rect><rect x="10" y="289.8" width="2" height="1" fill="#565656"></rect><rect x="10" y="293.4" width="2" height="1" fill="#565656"></rect><rect x="10" y="297.0" width="2" height="1" fill="#565656"></rect><rect x="7" y="300.6" width="5" height="1" fill="#565656"></rect><rect x="10" y="304.1" width="2" height="1" fill="#565656"></rect><rect x="10" y="307.7" width="2" height="1" fill="#565656"></rect><rect x="10" y="311.3" width="2" height="1" fill="#565656"></rect><rect x="0" y="314.9" width="12" height="1" fill="#626262"></rect><rect x="10" y="318.5" width="2" height="1" fill="#565656"></rect><rect x="10" y="322.1" width="2" height="1" fill="#565656"></rect><rect x="10" y="325.7" width="2" height="1" fill="#565656"></rect><rect x="7" y="329.2" width="5" height="1" fill="#565656"></rect><rect x="10" y="332.8" width="2" height="1" fill="#565656"></rect><rect x="10" y="336.4" width="2" height="1" fill="#565656"></rect><rect x="10" y="340.0" width="2" height="1" fill="#565656"></rect><rect x="0" y="343.6" width="12" height="1" fill="#626262"></rect><rect x="10" y="347.2" width="2" height="1" fill="#565656"></rect><rect x="10" y="350.8" width="2" height="1" fill="#565656"></rect><rect x="10" y="354.4" width="2" height="1" fill="#565656"></rect><rect x="7" y="358.0" width="5" height="1" fill="#565656"></rect><rect x="10" y="361.5" width="2" height="1" fill="#565656"></rect><rect x="10" y="365.1" width="2" height="1" fill="#565656"></rect><rect x="10" y="368.7" width="2" height="1" fill="#565656"></rect><rect x="0" y="372.3" width="12" height="1" fill="#626262"></rect><rect x="10" y="375.9" width="2" height="1" fill="#565656"></rect><rect x="10" y="379.5" width="2" height="1" fill="#565656"></rect><rect x="10" y="383.1" width="2" height="1" fill="#565656"></rect><rect x="7" y="386.7" width="5" height="1" fill="#565656"></rect><rect x="10" y="390.2" width="2" height="1" fill="#565656"></rect><rect x="10" y="393.8" width="2" height="1" fill="#565656"></rect><rect x="10" y="397.4" width="2" height="1" fill="#565656"></rect><rect x="0" y="401.0" width="12" height="1" fill="#626262"></rect><rect x="10" y="404.6" width="2" height="1" fill="#565656"></rect><rect x="10" y="408.2" width="2" height="1" fill="#565656"></rect><rect x="10" y="411.8" width="2" height="1" fill="#565656"></rect><rect x="7" y="415.4" width="5" height="1" fill="#565656"></rect><rect x="10" y="418.9" width="2" height="1" fill="#565656"></rect><rect x="10" y="422.5" width="2" height="1" fill="#565656"></rect><rect x="10" y="426.1" width="2" height="1" fill="#565656"></rect><rect x="0" y="429.7" width="12" height="1" fill="#626262"></rect><rect x="10" y="433.3" width="2" height="1" fill="#565656"></rect><rect x="10" y="436.9" width="2" height="1" fill="#565656"></rect><rect x="10" y="440.5" width="2" height="1" fill="#565656"></rect><rect x="7" y="444.0" width="5" height="1" fill="#565656"></rect><rect x="10" y="447.6" width="2" height="1" fill="#565656"></rect><rect x="10" y="451.2" width="2" height="1" fill="#565656"></rect><rect x="10" y="454.8" width="2" height="1" fill="#565656"></rect><rect x="0" y="458.4" width="12" height="1" fill="#626262"></rect><rect x="10" y="462.0" width="2" height="1" fill="#565656"></rect><rect x="10" y="465.6" width="2" height="1" fill="#565656"></rect><rect x="10" y="469.2" width="2" height="1" fill="#565656"></rect><rect x="7" y="472.8" width="5" height="1" fill="#565656"></rect><rect x="10" y="476.3" width="2" height="1" fill="#565656"></rect><rect x="10" y="479.9" width="2" height="1" fill="#565656"></rect><rect x="10" y="483.5" width="2" height="1" fill="#565656"></rect><rect x="0" y="487.1" width="12" height="1" fill="#626262"></rect><rect x="10" y="490.7" width="2" height="1" fill="#565656"></rect><rect x="10" y="494.3" width="2" height="1" fill="#565656"></rect><rect x="10" y="497.9" width="2" height="1" fill="#565656"></rect><rect x="7" y="501.4" width="5" height="1" fill="#565656"></rect><rect x="10" y="505.0" width="2" height="1" fill="#565656"></rect><rect x="10" y="508.6" width="2" height="1" fill="#565656"></rect><rect x="10" y="512.2" width="2" height="1" fill="#565656"></rect><rect x="0" y="515.8" width="12" height="1" fill="#626262"></rect><rect x="10" y="519.4" width="2" height="1" fill="#565656"></rect><rect x="10" y="523.0" width="2" height="1" fill="#565656"></rect><rect x="10" y="526.6" width="2" height="1" fill="#565656"></rect><rect x="7" y="530.1" width="5" height="1" fill="#565656"></rect><rect x="10" y="533.7" width="2" height="1" fill="#565656"></rect><rect x="10" y="537.3" width="2" height="1" fill="#565656"></rect><rect x="10" y="540.9" width="2" height="1" fill="#565656"></rect><rect x="0" y="544.5" width="12" height="1" fill="#626262"></rect><rect x="10" y="548.1" width="2" height="1" fill="#565656"></rect><rect x="10" y="551.7" width="2" height="1" fill="#565656"></rect><rect x="10" y="555.3" width="2" height="1" fill="#565656"></rect><rect x="7" y="558.9" width="5" height="1" fill="#565656"></rect><rect x="10" y="562.4" width="2" height="1" fill="#565656"></rect><rect x="10" y="566.0" width="2" height="1" fill="#565656"></rect><rect x="10" y="569.6" width="2" height="1" fill="#565656"></rect><rect x="0" y="573.2" width="12" height="1" fill="#626262"></rect><rect x="10" y="576.8" width="2" height="1" fill="#565656"></rect><rect x="10" y="580.4" width="2" height="1" fill="#565656"></rect><rect x="10" y="584.0" width="2" height="1" fill="#565656"></rect><rect x="7" y="587.6" width="5" height="1" fill="#565656"></rect><rect x="10" y="591.1" width="2" height="1" fill="#565656"></rect><rect x="10" y="594.7" width="2" height="1" fill="#565656"></rect><rect x="10" y="598.3" width="2" height="1" fill="#565656"></rect><rect x="0" y="601.9" width="12" height="1" fill="#626262"></rect><rect x="10" y="605.5" width="2" height="1" fill="#565656"></rect><rect x="10" y="609.1" width="2" height="1" fill="#565656"></rect><rect x="10" y="612.7" width="2" height="1" fill="#565656"></rect><rect x="7" y="616.2" width="5" height="1" fill="#565656"></rect><rect x="10" y="619.8" width="2" height="1" fill="#565656"></rect><rect x="10" y="623.4" width="2" height="1" fill="#565656"></rect><rect x="10" y="627.0" width="2" height="1" fill="#565656"></rect><rect x="0" y="630.6" width="12" height="1" fill="#626262"></rect><rect x="10" y="634.2" width="2" height="1" fill="#565656"></rect></svg>
<div class="t" style="left:25px;top:74.2px;font-size:7px;color:#a2a2a2;width:8px;text-align:center">8</div>
<div class="t" style="left:25px;top:81.7px;font-size:7px;color:#a2a2a2;width:8px;text-align:center">0</div>
<div class="t" style="left:25px;top:89.2px;font-size:7px;color:#a2a2a2;width:8px;text-align:center">0</div>
<div class="t" style="left:25px;top:102.9px;font-size:7px;color:#a2a2a2;width:8px;text-align:center">6</div>
<div class="t" style="left:25px;top:110.4px;font-size:7px;color:#a2a2a2;width:8px;text-align:center">0</div>
<div class="t" style="left:25px;top:117.9px;font-size:7px;color:#a2a2a2;width:8px;text-align:center">0</div>
<div class="t" style="left:25px;top:131.6px;font-size:7px;color:#a2a2a2;width:8px;text-align:center">4</div>
<div class="t" style="left:25px;top:139.1px;font-size:7px;color:#a2a2a2;width:8px;text-align:center">0</div>
<div class="t" style="left:25px;top:146.6px;font-size:7px;color:#a2a2a2;width:8px;text-align:center">0</div>
<div class="t" style="left:25px;top:160.3px;font-size:7px;color:#a2a2a2;width:8px;text-align:center">2</div>
<div class="t" style="left:25px;top:167.8px;font-size:7px;color:#a2a2a2;width:8px;text-align:center">0</div>
<div class="t" style="left:25px;top:175.3px;font-size:7px;color:#a2a2a2;width:8px;text-align:center">0</div>
<div class="t" style="left:25px;top:189.0px;font-size:7px;color:#a2a2a2;width:8px;text-align:center">0</div>
<div class="t" style="left:25px;top:217.7px;font-size:7px;color:#a2a2a2;width:8px;text-align:center">2</div>
<div class="t" style="left:25px;top:225.2px;font-size:7px;color:#a2a2a2;width:8px;text-align:center">0</div>
<div class="t" style="left:25px;top:232.7px;font-size:7px;color:#a2a2a2;width:8px;text-align:center">0</div>
<div class="t" style="left:25px;top:246.4px;font-size:7px;color:#a2a2a2;width:8px;text-align:center">4</div>
<div class="t" style="left:25px;top:253.9px;font-size:7px;color:#a2a2a2;width:8px;text-align:center">0</div>
<div class="t" style="left:25px;top:261.4px;font-size:7px;color:#a2a2a2;width:8px;text-align:center">0</div>
<div class="t" style="left:25px;top:275.1px;font-size:7px;color:#a2a2a2;width:8px;text-align:center">6</div>
<div class="t" style="left:25px;top:282.6px;font-size:7px;color:#a2a2a2;width:8px;text-align:center">0</div>
<div class="t" style="left:25px;top:290.1px;font-size:7px;color:#a2a2a2;width:8px;text-align:center">0</div>
<div class="t" style="left:25px;top:303.8px;font-size:7px;color:#a2a2a2;width:8px;text-align:center">8</div>
<div class="t" style="left:25px;top:311.3px;font-size:7px;color:#a2a2a2;width:8px;text-align:center">0</div>
<div class="t" style="left:25px;top:318.8px;font-size:7px;color:#a2a2a2;width:8px;text-align:center">0</div>
<div class="a" style="left:26px;top:352.5px;width:22px;height:8px;transform-origin:0 0;transform:rotate(-90deg)"><div class="t" style="left: 1px; top: 0.5px; font-size: 7px; color: rgb(154, 154, 154); transform: scaleX(1.1875);">1000</div></div>
<div class="a" style="left:26px;top:381.2px;width:22px;height:8px;transform-origin:0 0;transform:rotate(-90deg)"><div class="t" style="left: 1px; top: 0.5px; font-size: 7px; color: rgb(154, 154, 154); transform: scaleX(1.1875);">1200</div></div>
<div class="a" style="left:26px;top:409.9px;width:22px;height:8px;transform-origin:0 0;transform:rotate(-90deg)"><div class="t" style="left: 1px; top: 0.5px; font-size: 7px; color: rgb(154, 154, 154); transform: scaleX(1.1875);">1400</div></div>
<div class="a" style="left:26px;top:438.6px;width:22px;height:8px;transform-origin:0 0;transform:rotate(-90deg)"><div class="t" style="left: 1px; top: 0.5px; font-size: 7px; color: rgb(154, 154, 154); transform: scaleX(1.1875);">1600</div></div>
<div class="a" style="left:26px;top:467.3px;width:22px;height:8px;transform-origin:0 0;transform:rotate(-90deg)"><div class="t" style="left: 1px; top: 0.5px; font-size: 7px; color: rgb(154, 154, 154); transform: scaleX(1.1875);">1800</div></div>
<div class="a" style="left:26px;top:496.0px;width:22px;height:8px;transform-origin:0 0;transform:rotate(-90deg)"><div class="t" style="left: 1px; top: 0.5px; font-size: 7px; color: rgb(154, 154, 154); transform: scaleX(1.1875);">2000</div></div>
<div class="a" style="left:26px;top:524.7px;width:22px;height:8px;transform-origin:0 0;transform:rotate(-90deg)"><div class="t" style="left: 1px; top: 0.5px; font-size: 7px; color: rgb(154, 154, 154); transform: scaleX(1.1875);">2200</div></div>
<div class="a" style="left:26px;top:553.4px;width:22px;height:8px;transform-origin:0 0;transform:rotate(-90deg)"><div class="t" style="left: 1px; top: 0.5px; font-size: 7px; color: rgb(154, 154, 154); transform: scaleX(1.1875);">2400</div></div>
<div class="a" style="left:26px;top:582.1px;width:22px;height:8px;transform-origin:0 0;transform:rotate(-90deg)"><div class="t" style="left: 1px; top: 0.5px; font-size: 7px; color: rgb(154, 154, 154); transform: scaleX(1.1875);">2600</div></div>
<div class="a" style="left:26px;top:610.8px;width:22px;height:8px;transform-origin:0 0;transform:rotate(-90deg)"><div class="t" style="left: 1px; top: 0.5px; font-size: 7px; color: rgb(154, 154, 154); transform: scaleX(1.1875);">2800</div></div>
<div class="a" style="left:26px;top:639.5px;width:22px;height:8px;transform-origin:0 0;transform:rotate(-90deg)"><div class="t" style="left: 1px; top: 0.5px; font-size: 7px; color: rgb(154, 154, 154); transform: scaleX(1.1875);">3000</div></div>
<div class="a" style="left:26px;top:668.2px;width:22px;height:8px;transform-origin:0 0;transform:rotate(-90deg)"><div class="t" style="left: 1px; top: 0.5px; font-size: 7px; color: rgb(154, 154, 154); transform: scaleX(1.1875);">3200</div></div>
<div class="a" style="left:26px;top:696.9px;width:22px;height:8px;transform-origin:0 0;transform:rotate(-90deg)"><div class="t" style="left: 1px; top: 0.5px; font-size: 7px; color: rgb(154, 154, 154); transform: scaleX(1.1875);">3400</div></div>
<div class="a" style="left:26px;top:725.6px;width:22px;height:8px;transform-origin:0 0;transform:rotate(-90deg)"><div class="t" style="left: 1px; top: 0.5px; font-size: 7px; color: rgb(154, 154, 154); transform: scaleX(1.1875);">3600</div></div>
<div class="a" style="left:321px;top:73px;width:5px;height:638px;background:#2f3d3e;"></div>
<div class="a" style="left:322px;top:73px;width:3px;height:638px;background:#2b4a4b;"></div>
<div class="a" style="left:323px;top:73px;width:1px;height:638px;background:#6f9090;"></div>
<div class="a" style="left:570px;top:73px;width:5px;height:638px;background:#2f3d3e;"></div>
<div class="a" style="left:571px;top:73px;width:3px;height:638px;background:#2b4a4b;"></div>
<div class="a" style="left:572px;top:73px;width:1px;height:638px;background:#6f9090;"></div>
<div class="a" style="left:36px;top:208px;width:823px;height:5px;background:#2f3d3e;"></div>
<div class="a" style="left:36px;top:209px;width:823px;height:3px;background:#2b4a4b;"></div>
<div class="a" style="left:36px;top:210px;width:823px;height:1px;background:#6f9090;"></div>
<div class="a" style="left:36px;top:572px;width:823px;height:5px;background:#2f3d3e;"></div>
<div class="a" style="left:36px;top:573px;width:823px;height:3px;background:#2b4a4b;"></div>
<div class="a" style="left:36px;top:574px;width:823px;height:1px;background:#6f9090;"></div>
<div class="a checker" style="left:304px;top:187px;width:289px;height:411px"></div>
<div class="a" style="left:320px;top:187px;width:7px;height:410px;background:rgba(130,240,240,0.13);"></div>
<div class="a" style="left:323px;top:187px;width:1px;height:410px;background:rgba(80,190,190,0.30);"></div>
<div class="a" style="left:569px;top:187px;width:7px;height:410px;background:rgba(130,240,240,0.13);"></div>
<div class="a" style="left:572px;top:187px;width:1px;height:410px;background:rgba(80,190,190,0.30);"></div>
<div class="a" style="left:304px;top:207px;width:289px;height:7px;background:rgba(130,240,240,0.13);"></div>
<div class="a" style="left:304px;top:210px;width:289px;height:1px;background:rgba(80,190,190,0.30);"></div>
<div class="a" style="left:304px;top:571px;width:289px;height:7px;background:rgba(130,240,240,0.13);"></div>
<div class="a" style="left:304px;top:574px;width:289px;height:1px;background:rgba(80,190,190,0.30);"></div>
<div class="a" style="left:323px;top:69px;width:1px;height:4px;background:#6f9090;"></div>
<div class="a" style="left:572px;top:69px;width:1px;height:4px;background:#6f9090;"></div>
<div class="a" style="left:32px;top:210px;width:4px;height:1px;background:#6f9090;"></div>
<div class="a" style="left:32px;top:574px;width:4px;height:1px;background:#6f9090;"></div>
<div class="a" style="left:394px;top:157px;width:292px;height:404px;background:#ffffff;"></div>
<div class="a" style="left:396px;top:162px;width:237px;height:396px;background:#f0f0f0;"></div>
<div class="a" style="left:633px;top:162px;width:53px;height:396px;background:#d8d8d8;"></div>
<div class="t" style="left: 412.5px; top: 187px; font-size: 22px; color: rgb(38, 38, 38); font-weight: bold; font-family: &quot;Liberation Sans&quot;, sans-serif; -webkit-text-stroke: 0.3px rgb(38, 38, 38); transform: scaleX(0.79);">Future Corporation</div>
<div class="t" style="left: 412px; top: 214.5px; font-size: 6px; color: rgb(58, 58, 58); font-weight: bold; font-family: &quot;Liberation Sans&quot;, sans-serif; transform: scaleX(1);">NO. 236580</div>
<div class="t" style="left: 414px; top: 227px; font-size: 6px; color: rgb(42, 42, 42); font-weight: bold; font-family: &quot;Liberation Sans&quot;, sans-serif; transform: scaleX(0.851852);">Simple Tax Invoice</div>
<div class="a" style="left:412px;top:236px;width:205px;height:2px;background:#808080;"></div>
<div class="t" style="left: 412px; top: 252.75px; font-size: 5.5px; color: rgb(74, 74, 74); font-weight: normal; font-family: &quot;Liberation Sans&quot;, sans-serif; letter-spacing: 1px; transform: scaleX(0.891892);">BILLED TO</div>
<div class="t" style="left: 412px; top: 264.5px; font-size: 9px; color: rgb(56, 56, 56); font-weight: bold; font-family: &quot;Liberation Sans&quot;, sans-serif; transform: scaleX(0.939024);">MR. JOHN CITIZEN</div>
<div class="t" style="left: 412px; top: 277px; font-size: 5px; color: rgb(85, 85, 85); font-weight: normal; font-family: &quot;Liberation Sans&quot;, sans-serif; transform: scaleX(0.945946);">(039) 477 - 1556</div>
<div class="t" style="left: 412px; top: 283.5px; font-size: 5px; color: rgb(85, 85, 85); font-weight: normal; font-family: &quot;Liberation Sans&quot;, sans-serif; transform: scaleX(1.02381);">j.citizen@mail.com</div>
<div class="t" style="left: 412px; top: 304.25px; font-size: 5.5px; color: rgb(58, 58, 58); font-weight: bold; font-family: &quot;Liberation Sans&quot;, sans-serif; letter-spacing: 1px; transform: scaleX(0.939394);">PAYMENT DETAILS</div>
<div class="t" style="left: 412px; top: 320.2px; font-size: 9px; color: rgb(51, 51, 51); font-weight: bold; font-family: &quot;Liberation Sans&quot;, sans-serif; transform: scaleX(0.914634);">Future Corporation</div>
<div class="t" style="left: 412px; top: 336.5px; font-size: 5px; color: rgb(85, 85, 85); font-weight: normal; font-family: &quot;Liberation Sans&quot;, sans-serif; transform: scaleX(1.03947);">Account Name:Future Corporation</div>
<div class="t" style="left: 412px; top: 346.5px; font-size: 5px; color: rgb(85, 85, 85); font-weight: normal; font-family: &quot;Liberation Sans&quot;, sans-serif; transform: scaleX(1.03125);">Account Number:135-4344-0</div>
<div class="t" style="left: 412px; top: 369.8px; font-size: 6px; color: rgb(51, 51, 51); font-weight: bold; font-family: &quot;Liberation Sans&quot;, sans-serif; transform: scaleX(1);">ISSUED ON 01 June</div>
<div class="t" style="left: 431px; top: 399.5px; font-size: 5px; color: rgb(51, 51, 51); font-weight: normal; font-family: &quot;Liberation Sans&quot;, sans-serif; transform: scaleX(0.764706);">DESCRIPTION</div>
<div class="t" style="left: 515px; top: 399.5px; font-size: 5px; color: rgb(51, 51, 51); font-weight: normal; font-family: &quot;Liberation Sans&quot;, sans-serif; transform: scaleX(0.88);">QUANTITY</div>
<div class="t" style="left: 555px; top: 399.5px; font-size: 5px; color: rgb(51, 51, 51); font-weight: normal; font-family: &quot;Liberation Sans&quot;, sans-serif; transform: scaleX(0.8);">PRICE</div>
<div class="t" style="left: 593px; top: 399.5px; font-size: 5px; color: rgb(51, 51, 51); font-weight: normal; font-family: &quot;Liberation Sans&quot;, sans-serif; transform: scaleX(0.8125);">TOTAL</div>
<div class="a" style="left:412px;top:409px;width:205px;height:1px;background:#555555;"></div>
<div class="a" style="left:412px;top:410px;width:205px;height:1px;background:#9a9a9a;"></div>
<div class="t" style="left: 433px; top: 422px; font-size: 6px; color: rgb(51, 51, 51); font-weight: normal; font-family: &quot;Liberation Sans&quot;, sans-serif; transform: scaleX(0.84);">Service 1</div>
<div class="t" style="left: 525px; top: 422.5px; font-size: 6px; color: rgb(51, 51, 51); font-weight: normal; font-family: &quot;Liberation Sans&quot;, sans-serif; transform: scaleX(0.833333);">1</div>
<div class="t" style="left: 551px; top: 422.5px; font-size: 6px; color: rgb(51, 51, 51); font-weight: normal; font-family: &quot;Liberation Sans&quot;, sans-serif; transform: scaleX(0.833333);">USD 240</div>
<div class="t" style="left: 589px; top: 422.5px; font-size: 6px; color: rgb(51, 51, 51); font-weight: normal; font-family: &quot;Liberation Sans&quot;, sans-serif; transform: scaleX(0.875);">USD 240</div>
<div class="t" style="left: 433px; top: 430px; font-size: 6px; color: rgb(51, 51, 51); font-weight: normal; font-family: &quot;Liberation Sans&quot;, sans-serif; transform: scaleX(0.84);">Service 2</div>
<div class="t" style="left: 525px; top: 430.5px; font-size: 6px; color: rgb(51, 51, 51); font-weight: normal; font-family: &quot;Liberation Sans&quot;, sans-serif; transform: scaleX(0.833333);">1</div>
<div class="t" style="left: 551px; top: 430.5px; font-size: 6px; color: rgb(51, 51, 51); font-weight: normal; font-family: &quot;Liberation Sans&quot;, sans-serif; transform: scaleX(0.833333);">USD 240</div>
<div class="t" style="left: 589px; top: 430.5px; font-size: 6px; color: rgb(51, 51, 51); font-weight: normal; font-family: &quot;Liberation Sans&quot;, sans-serif; transform: scaleX(0.875);">USD 240</div>
<div class="t" style="left: 439px; top: 438px; font-size: 6px; color: rgb(51, 51, 51); font-weight: normal; font-family: &quot;Liberation Sans&quot;, sans-serif; transform: scaleX(0.888889);">Tax</div>
<div class="t" style="left: 594px; top: 438px; font-size: 6px; color: rgb(51, 51, 51); font-weight: normal; font-family: &quot;Liberation Sans&quot;, sans-serif; transform: scaleX(1);">3 %</div>
<div class="a" style="left:412px;top:459px;width:205px;height:1px;background:#9d9d9d;"></div>
<div class="a" style="left:412px;top:460px;width:205px;height:1px;background:#c4c4c4;"></div>
<div class="t" style="left: 525px; top: 465px; font-size: 5px; color: rgb(51, 51, 51); font-weight: normal; font-family: &quot;Liberation Sans&quot;, sans-serif; letter-spacing: 1.5px; transform: scaleX(0.8);">TOTAL&nbsp;&nbsp;AMOUNT</div>
<div class="t" style="left: 589px; top: 464.5px; font-size: 5px; color: rgb(51, 51, 51); font-weight: normal; font-family: &quot;Liberation Sans&quot;, sans-serif; transform: scaleX(1.05263);">$ 494.40</div>
<div class="t" style="left: 561px; top: 472.5px; font-size: 5px; color: rgb(51, 51, 51); font-weight: normal; font-family: &quot;Liberation Sans&quot;, sans-serif; letter-spacing: 1.5px; transform: scaleX(0.785714);">TAX</div>
<div class="t" style="left: 596px; top: 472.5px; font-size: 5px; color: rgb(51, 51, 51); font-weight: normal; font-family: &quot;Liberation Sans&quot;, sans-serif; transform: scaleX(1.14286);">3%</div>
<div class="t" style="left: 534px; top: 481.1px; font-size: 5px; color: rgb(51, 51, 51); font-weight: normal; font-family: &quot;Liberation Sans&quot;, sans-serif; letter-spacing: 1.5px; transform: scaleX(0.77551);">AMOUNT DUE</div>
<div class="t" style="left: 589px; top: 480.5px; font-size: 5px; color: rgb(51, 51, 51); font-weight: normal; font-family: &quot;Liberation Sans&quot;, sans-serif; transform: scaleX(1.05263);">$ 494.40</div>
<div class="t" style="left: 412.5px; top: 511.5px; font-size: 18px; color: rgb(46, 46, 46); font-weight: normal; font-family: &quot;Liberation Sans&quot;, sans-serif; transform: scaleX(0.468085);">Thank&nbsp;&nbsp;you!</div>
<div class="t" style="left: 413.5px; top: 542.75px; font-size: 6.5px; color: rgb(0, 0, 0); font-weight: bold; font-family: &quot;Liberation Serif&quot;, serif; -webkit-text-stroke: 0.25px rgb(0, 0, 0); transform: scaleX(0.993976);">Thank you for your purchase!</div>
<div class="a" style="left:675.5px;top:274.5px;width:106px;height:7px;transform-origin:0 0;transform:rotate(-90deg)"><div class="t" style="left: 0px; top: 0.5px; font-size: 6px; color: rgb(80, 80, 80); transform: scaleX(0.868852);">www.futurecorporation.com&nbsp;&nbsp;+1-407-321-7569</div></div>
<div class="a" style="left:1px;top:49px;width:1px;height:671px;background:#474747;"></div>
<div class="a" style="left:22px;top:49px;width:1px;height:671px;background:#474747;"></div>
<div class="a" style="left:3px;top:62px;width:18px;height:16px;background:#333333;"></div>
<svg style="left:6.0px;top:64.0px;" width="12" height="12" viewBox="0 0 12 12"><path d="M6 1V11M1 6H11" stroke="#d4d4d4" stroke-width="1.1"></path><path d="M6 0L4.3 2.2H7.7Z M6 12L4.3 9.8H7.7Z M0 6L2.2 4.3V7.7Z M12 6L9.8 4.3V7.7Z" fill="#d4d4d4"></path></svg>
<svg style="left:17px;top:73px;" width="3" height="3" viewBox="0 0 3 3"><path d="M3 0 V3 H0Z" fill="#9a9a9a"></path></svg>
<svg style="left:6.0px;top:82.0px;" width="12" height="12" viewBox="0 0 12 12"><rect x="1.5" y="2.5" width="9" height="7" stroke="#d4d4d4" fill="none" stroke-width="1.1" stroke-dasharray="2 1"></rect></svg>
<svg style="left:17px;top:91px;" width="3" height="3" viewBox="0 0 3 3"><path d="M3 0 V3 H0Z" fill="#9a9a9a"></path></svg>
<svg style="left:6.0px;top:99.0px;" width="12" height="12" viewBox="0 0 12 12"><path d="M2 2 L10 1.5 L8 6 Q6 10 3 10 L5 7 Z" stroke="#d4d4d4" fill="none" stroke-width="1.1"></path></svg>
<svg style="left:17px;top:108px;" width="3" height="3" viewBox="0 0 3 3"><path d="M3 0 V3 H0Z" fill="#9a9a9a"></path></svg>
<svg style="left:6.0px;top:118.0px;" width="12" height="12" viewBox="0 0 12 12"><rect x="1.5" y="1.5" width="6" height="6" stroke="#d4d4d4" fill="none" stroke-width="1" stroke-dasharray="1.5 1"></rect><rect x="3" y="3" width="3" height="3" fill="#d4d4d4"></rect><path d="M6 5 L11 9 L8.5 9.5 L7.5 11.5Z" fill="#d4d4d4"></path></svg>
<svg style="left:17px;top:127px;" width="3" height="3" viewBox="0 0 3 3"><path d="M3 0 V3 H0Z" fill="#9a9a9a"></path></svg>
<svg style="left:6.0px;top:136.0px;" width="12" height="12" viewBox="0 0 12 12"><path d="M3 0.5 V9 H11.5 M0.5 3 H9 V11.5" stroke="#d4d4d4" fill="none" stroke-width="1.3"></path></svg>
<svg style="left:17px;top:145px;" width="3" height="3" viewBox="0 0 3 3"><path d="M3 0 V3 H0Z" fill="#9a9a9a"></path></svg>
<svg style="left:6.0px;top:152.0px;" width="12" height="12" viewBox="0 0 12 12"><rect x="1.5" y="1.5" width="9" height="9" stroke="#d4d4d4" fill="none" stroke-width="1.1"></rect><path d="M1.5 1.5L10.5 10.5M10.5 1.5L1.5 10.5" stroke="#d4d4d4" stroke-width="1"></path></svg>
<svg style="left:17px;top:161px;" width="3" height="3" viewBox="0 0 3 3"><path d="M3 0 V3 H0Z" fill="#9a9a9a"></path></svg>
<svg style="left:6.0px;top:171.0px;" width="12" height="12" viewBox="0 0 12 12"><path d="M1 11 L2 8 L7 3 L9 5 L4 10 Z" stroke="#d4d4d4" fill="none" stroke-width="1.1"></path><path d="M7.5 1.5 L10.5 4.5 L11.5 2.5 L9.5 0.5Z" fill="#d4d4d4"></path></svg>
<svg style="left:17px;top:180px;" width="3" height="3" viewBox="0 0 3 3"><path d="M3 0 V3 H0Z" fill="#9a9a9a"></path></svg>
<svg style="left:6.0px;top:189.0px;" width="12" height="12" viewBox="0 0 12 12"><path d="M2 7.5 L7.5 2 Q9 0.5 10.5 2 Q12 3.5 10.5 5 L5 10.5 Q3.5 12 2 10.5 Q0.5 9 2 7.5Z" fill="#d4d4d4"></path><circle cx="6" cy="6" r="1" fill="#535353"></circle></svg>
<svg style="left:17px;top:198px;" width="3" height="3" viewBox="0 0 3 3"><path d="M3 0 V3 H0Z" fill="#9a9a9a"></path></svg>
<svg style="left:6.0px;top:207.0px;" width="12" height="12" viewBox="0 0 12 12"><path d="M11 1 L5 8" stroke="#d4d4d4" stroke-width="1.6"></path><path d="M4.5 7.5 Q1.5 8 1.5 11 Q4.5 11 5.5 8.5Z" fill="#d4d4d4"></path></svg>
<svg style="left:17px;top:216px;" width="3" height="3" viewBox="0 0 3 3"><path d="M3 0 V3 H0Z" fill="#9a9a9a"></path></svg>
<svg style="left:6.0px;top:226.0px;" width="12" height="12" viewBox="0 0 12 12"><circle cx="6" cy="3" r="2.3" fill="#d4d4d4"></circle><rect x="5" y="4" width="2" height="4" fill="#d4d4d4"></rect><rect x="1.5" y="7.5" width="9" height="2.5" fill="#d4d4d4"></rect><rect x="2" y="10.5" width="8" height="1" fill="#d4d4d4"></rect></svg>
<svg style="left:17px;top:235px;" width="3" height="3" viewBox="0 0 3 3"><path d="M3 0 V3 H0Z" fill="#9a9a9a"></path></svg>
<svg style="left:6.0px;top:244.0px;" width="12" height="12" viewBox="0 0 12 12"><path d="M11 1 L5 8" stroke="#d4d4d4" stroke-width="1.5"></path><path d="M4.5 7.5 Q1.5 8 1.5 11 Q4.5 11 5.5 8.5Z" fill="#d4d4d4"></path><path d="M1 3 Q3 0.5 6 2" stroke="#d4d4d4" fill="none" stroke-width="1"></path></svg>
<svg style="left:17px;top:253px;" width="3" height="3" viewBox="0 0 3 3"><path d="M3 0 V3 H0Z" fill="#9a9a9a"></path></svg>
<svg style="left:6.0px;top:262.0px;" width="12" height="12" viewBox="0 0 12 12"><path d="M2 8 L7 2 L11 5.5 L6 11.5 L3.5 11.5 Z" fill="#d4d4d4"></path><path d="M1 11.5 H11" stroke="#d4d4d4" stroke-width="1"></path></svg>
<svg style="left:17px;top:271px;" width="3" height="3" viewBox="0 0 3 3"><path d="M3 0 V3 H0Z" fill="#9a9a9a"></path></svg>
<svg style="left:6.0px;top:281.0px;" width="12" height="12" viewBox="0 0 12 12"><defs><linearGradient id="gr" x1="0" x2="1"><stop offset="0" stop-color="#222"></stop><stop offset="1" stop-color="#e0e0e0"></stop></linearGradient></defs><rect x="1.5" y="1.5" width="9" height="9" fill="url(#gr)" stroke="#d4d4d4" stroke-width="1"></rect></svg>
<svg style="left:17px;top:290px;" width="3" height="3" viewBox="0 0 3 3"><path d="M3 0 V3 H0Z" fill="#9a9a9a"></path></svg>
<svg style="left:6.0px;top:299.0px;" width="12" height="12" viewBox="0 0 12 12"><path d="M6 0.5 Q10.5 6 10 8 Q9.5 11.5 6 11.5 Q2.5 11.5 2 8 Q1.5 6 6 0.5Z" fill="#d4d4d4"></path></svg>
<svg style="left:17px;top:308px;" width="3" height="3" viewBox="0 0 3 3"><path d="M3 0 V3 H0Z" fill="#9a9a9a"></path></svg>
<svg style="left:6.0px;top:317.0px;" width="12" height="12" viewBox="0 0 12 12"><circle cx="7" cy="4.5" r="3.5" fill="#d4d4d4"></circle><path d="M5 7 L1 11.5" stroke="#d4d4d4" stroke-width="1.6"></path></svg>
<svg style="left:17px;top:326px;" width="3" height="3" viewBox="0 0 3 3"><path d="M3 0 V3 H0Z" fill="#9a9a9a"></path></svg>
<svg style="left:6.0px;top:336.0px;" width="12" height="12" viewBox="0 0 12 12"><path d="M6 0.5 L10.5 5 L8 11.5 H4 L1.5 5 Z" stroke="#d4d4d4" fill="none" stroke-width="1.2"></path><circle cx="6" cy="6.5" r="1" fill="#d4d4d4"></circle></svg>
<svg style="left:17px;top:345px;" width="3" height="3" viewBox="0 0 3 3"><path d="M3 0 V3 H0Z" fill="#9a9a9a"></path></svg>
<svg style="left:6.0px;top:354.0px;" width="12" height="12" viewBox="0 0 12 12"><path d="M1.5 1.5 H10.5 V3.5 M1.5 1.5 V3.5 M6 1.5 V11 M4 11 H8" stroke="#d4d4d4" fill="none" stroke-width="1.6"></path></svg>
<svg style="left:17px;top:363px;" width="3" height="3" viewBox="0 0 3 3"><path d="M3 0 V3 H0Z" fill="#9a9a9a"></path></svg>
<svg style="left:6.0px;top:371.0px;" width="12" height="12" viewBox="0 0 12 12"><path d="M3 0.5 L10 7.5 L6.5 7.5 L8.5 11.5 L7 12 L5 8 L3 10.5Z" fill="#d4d4d4"></path></svg>
<svg style="left:17px;top:380px;" width="3" height="3" viewBox="0 0 3 3"><path d="M3 0 V3 H0Z" fill="#9a9a9a"></path></svg>
<svg style="left:6.0px;top:389.0px;" width="12" height="12" viewBox="0 0 12 12"><rect x="1.5" y="1.5" width="9" height="9" fill="#6a6a6a" stroke="#d4d4d4" stroke-width="1.1"></rect></svg>
<svg style="left:17px;top:398px;" width="3" height="3" viewBox="0 0 3 3"><path d="M3 0 V3 H0Z" fill="#9a9a9a"></path></svg>
<svg style="left:6.0px;top:407.0px;" width="12" height="12" viewBox="0 0 12 12"><path d="M3 11 Q1 8 1.5 6 L3 6 L4 7.5 L4 2 Q4.8 1 5.5 2 L5.5 5 L5.8 1 Q6.8 0 7.5 1 L7.5 5 L8 2 Q8.8 1 9.5 2 L9.5 5.5 L10 4 Q11 3.5 11 5 L10.5 9 Q9.5 11.5 8 11.5Z" fill="#d4d4d4"></path></svg>
<svg style="left:17px;top:416px;" width="3" height="3" viewBox="0 0 3 3"><path d="M3 0 V3 H0Z" fill="#9a9a9a"></path></svg>
<svg style="left:6.0px;top:424.0px;" width="12" height="12" viewBox="0 0 12 12"><circle cx="7" cy="5" r="3.8" stroke="#d4d4d4" fill="none" stroke-width="1.4"></circle><path d="M4.2 7.8 L1 11" stroke="#d4d4d4" stroke-width="1.8"></path></svg>
<svg style="left:17px;top:433px;" width="3" height="3" viewBox="0 0 3 3"><path d="M3 0 V3 H0Z" fill="#9a9a9a"></path></svg>
<div class="a" style="left:6.7px;top:448.7px;width:2.6px;height:2.6px;background:#dcdcdc;border-radius:50%"></div>
<div class="a" style="left:10.7px;top:448.7px;width:2.6px;height:2.6px;background:#dcdcdc;border-radius:50%"></div>
<div class="a" style="left:14.7px;top:448.7px;width:2.6px;height:2.6px;background:#dcdcdc;border-radius:50%"></div>
<svg style="left:3px;top:462px;" width="7" height="8" viewBox="0 0 7 8"><rect x="0.5" y="0.5" width="4" height="4" fill="#111" stroke="#ddd" stroke-width="0.8"></rect><rect x="2.5" y="3" width="4" height="4.5" fill="#eee"></rect></svg>
<svg style="left:13px;top:462px;" width="7" height="8" viewBox="0 0 7 8"><path d="M1 2 H5 V7" stroke="#ccc" fill="none" stroke-width="1"></path><path d="M4 0.5 L1 2 L4 3.5Z M3.5 5.5 L5 8 L6.5 5.5Z" fill="#ccc"></path></svg>
<div class="a" style="left:9px;top:480px;width:12px;height:13px;background:#ffffff;border:1px solid #2c2c2c"></div>
<div class="a" style="left:3px;top:474px;width:11px;height:12px;background:#ffffff;border:1px solid #2c2c2c"></div>
<svg style="left:6px;top:500px;" width="12" height="12" viewBox="0 0 12 12"><rect x="0.5" y="0.5" width="11" height="10" stroke="#d4d4d4" fill="none" stroke-width="1"></rect><circle cx="6" cy="5.5" r="3" fill="#6d6d6d" stroke="#d4d4d4" stroke-width="0.8"></circle></svg>
<svg style="left:6px;top:519px;" width="12" height="12" viewBox="0 0 12 12"><rect x="0.5" y="3.5" width="8" height="7" stroke="#d4d4d4" fill="none" stroke-width="1"></rect><rect x="3.5" y="0.5" width="8" height="7" stroke="#d4d4d4" fill="#535353" stroke-width="1"></rect></svg>
<div class="t" style="left: 886px; top: 41px; font-size: 8px; color: rgb(207, 207, 207); font-weight: normal; font-family: &quot;Liberation Sans&quot;, sans-serif; transform: scaleX(1.5);">«</div>
<div class="t" style="left: 1065px; top: 41px; font-size: 8px; color: rgb(207, 207, 207); font-weight: normal; font-family: &quot;Liberation Sans&quot;, sans-serif; transform: scaleX(1.5);">»</div>
<div class="a" style="left:871px;top:49px;width:24px;height:47px;background:#535353;"></div>
<div class="a" style="left:871px;top:96px;width:24px;height:1px;background:#3e3e3e;"></div>
<div class="a" style="left:871px;top:98px;width:24px;height:47px;background:#535353;"></div>
<div class="a" style="left:871px;top:145px;width:24px;height:1px;background:#3e3e3e;"></div>
<div class="a" style="left:871px;top:147px;width:24px;height:26px;background:#535353;"></div>
<div class="a" style="left:871px;top:173px;width:24px;height:1px;background:#3e3e3e;"></div>
<div class="a" style="left:871px;top:175px;width:24px;height:26px;background:#535353;"></div>
<div class="a" style="left:871px;top:201px;width:24px;height:1px;background:#3e3e3e;"></div>
<svg style="left:875px;top:56px;" width="14" height="14" viewBox="0 0 14 14"><path d="M0.5 1.5H4.5 M0.5 4H4 M0.5 6.5H4 M0.5 1.5V9" stroke="#d8d8d8" stroke-width="1"></path><path d="M12.5 2 L7.5 8" stroke="#d8d8d8" stroke-width="2.2" stroke-linecap="round"></path><path d="M6.8 7.5 Q3 8.5 3 13 Q7 12.5 8 9Z" fill="#d8d8d8"></path></svg>
<svg style="left:875px;top:78px;" width="14" height="12" viewBox="0 0 14 12"><circle cx="4" cy="2.5" r="2.3" fill="#d8d8d8"></circle><path d="M6 2.5H13M1.5 8.5H8" stroke="#d8d8d8" stroke-width="1.3"></path><path d="M8 8.5 L12.5 5.5 Q13.5 8.5 12.5 11.5Z" fill="#d8d8d8"></path></svg>
<svg style="left:877px;top:107px;" width="11" height="12" viewBox="0 0 11 12"><path d="M0.8 11.5 L4 0.8 L7.2 11.5 M2 7.5H6" stroke="#d8d8d8" fill="none" stroke-width="1.2"></path><path d="M9.5 0.5V11.5" stroke="#d8d8d8" stroke-width="1"></path></svg>
<svg style="left:877px;top:125px;" width="10" height="13" viewBox="0 0 10 13"><path d="M4.5 1 Q0.5 1 0.5 4 Q0.5 7 4.5 7Z" fill="#d8d8d8"></path><path d="M4.5 1V12.5 M7 1V12.5 M4 1H8.5" stroke="#d8d8d8" stroke-width="1.2"></path></svg>
<svg style="left:876px;top:153px;" width="12" height="14" viewBox="0 0 12 14"><path d="M1 12 Q4 10 6 2 Q7 1 7.5 3 L9 12 M3.5 8 H9" stroke="#d8d8d8" fill="none" stroke-width="1.2"></path></svg>
<svg style="left:876px;top:182px;" width="12" height="13" viewBox="0 0 12 13"><path d="M6 1 L11 3.5 V9.5 L6 12 L1 9.5 V3.5Z M1 3.5 L6 6 L11 3.5 M6 6V12" stroke="#d8d8d8" fill="none" stroke-width="1"></path></svg>
<div class="a" style="left:896px;top:49px;width:179px;height:20px;background:#424242;"></div>
<div class="a" style="left:1010px;top:50px;width:39px;height:19px;background:#535353;"></div>
<div class="t" style="left: 901px; top: 54.5px; font-size: 8px; color: rgb(168, 168, 168); font-weight: normal; font-family: &quot;Liberation Sans&quot;, sans-serif; transform: scaleX(0.772727);">Swatc</div>
<div class="t" style="left: 924px; top: 54.5px; font-size: 8px; color: rgb(168, 168, 168); font-weight: normal; font-family: &quot;Liberation Sans&quot;, sans-serif; transform: scaleX(0.85);">Gradi</div>
<div class="t" style="left: 947px; top: 54.5px; font-size: 8px; color: rgb(168, 168, 168); font-weight: normal; font-family: &quot;Liberation Sans&quot;, sans-serif; transform: scaleX(0.857143);">Patter</div>
<div class="t" style="left: 970px; top: 54.5px; font-size: 8px; color: rgb(168, 168, 168); font-weight: normal; font-family: &quot;Liberation Sans&quot;, sans-serif; transform: scaleX(0.952381);">Histor</div>
<div class="t" style="left: 993px; top: 54.5px; font-size: 8px; color: rgb(168, 168, 168); font-weight: normal; font-family: &quot;Liberation Sans&quot;, sans-serif; transform: scaleX(0.772727);">Action</div>
<div class="t" style="left: 1014.5px; top: 53.75px; font-size: 8.5px; color: rgb(240, 240, 240); font-weight: bold; font-family: &quot;Liberation Sans&quot;, sans-serif; transform: scaleX(0.738095);">Properties</div>
<div class="a" style="left:1049px;top:49px;width:26px;height:19px;background:#3e3e3e;"></div>
<svg style="left:1065px;top:56px;" width="7" height="6" viewBox="0 0 7 6"><path d="M0 0.5H7M0 3H7M0 5.5H7" stroke="#b0b0b0" stroke-width="1.1"></path></svg>
<div class="a" style="left:1075px;top:49px;width:1px;height:671px;background:#3f3f3f;"></div>
<div class="a" style="left:1076px;top:49px;width:4px;height:671px;background:#505050;"></div>
<div class="a" style="left:903px;top:73px;width:14px;height:15px;background:#3c3c3c;border-radius:1px"></div>
<svg style="left:906px;top:76px;" width="8" height="10" viewBox="0 0 8 10"><path d="M0.5 0.5 H5 L7.5 3 V9.5 H0.5Z" stroke="#d0d0d0" fill="none" stroke-width="1"></path></svg>
<div class="t" style="left: 920px; top: 78px; font-size: 8px; color: rgb(200, 200, 200); font-weight: normal; font-family: &quot;Liberation Sans&quot;, sans-serif; transform: scaleX(0.833333);">Document</div>
<div class="a" style="left:896px;top:93px;width:179px;height:1px;background:#444444;"></div>
<div class="a" style="left:896px;top:94px;width:179px;height:1px;background:#5a5a5a;"></div>
<svg style="left:900px;top:99px;" width="7" height="5" viewBox="0 0 7 5"><path d="M0.5 0.5 L3.5 3.5 L6.5 0.5" stroke="#aaa" fill="none" stroke-width="1"></path></svg>
<div class="t" style="left: 910px; top: 97.75px; font-size: 8.5px; color: rgb(230, 230, 230); font-weight: bold; font-family: &quot;Liberation Sans&quot;, sans-serif; transform: scaleX(0.766667);">Canvas</div>
<div class="t" style="left: 929px; top: 115.5px; font-size: 8px; color: rgb(184, 184, 184); font-weight: normal; font-family: &quot;Liberation Sans&quot;, sans-serif; transform: scaleX(0.875);">W</div>
<div class="a" style="left:939px;top:113px;width:31px;height:13px;background:#464646;"></div>
<div class="t" style="left: 941px; top: 115.5px; font-size: 8px; color: rgb(220, 220, 220); font-weight: normal; font-family: &quot;Liberation Sans&quot;, sans-serif; transform: scaleX(0.785714);">2232 px</div>
<div class="t" style="left: 981px; top: 115.5px; font-size: 8px; color: rgb(176, 176, 176); font-weight: normal; font-family: &quot;Liberation Sans&quot;, sans-serif; transform: scaleX(1.2);">X</div>
<div class="a" style="left:990px;top:113px;width:31px;height:13px;background:#4f4f4f;"></div>
<div class="t" style="left: 993px; top: 115.5px; font-size: 8px; color: rgb(106, 106, 106); font-weight: normal; font-family: &quot;Liberation Sans&quot;, sans-serif; transform: scaleX(0.8);">0 px</div>
<div class="t" style="left: 930px; top: 132.5px; font-size: 8px; color: rgb(184, 184, 184); font-weight: normal; font-family: &quot;Liberation Sans&quot;, sans-serif; transform: scaleX(1);">H</div>
<div class="a" style="left:939px;top:130px;width:31px;height:13px;background:#464646;"></div>
<div class="t" style="left: 941px; top: 132.5px; font-size: 8px; color: rgb(220, 220, 220); font-weight: normal; font-family: &quot;Liberation Sans&quot;, sans-serif; transform: scaleX(0.785714);">2854 px</div>
<div class="t" style="left: 981px; top: 132.5px; font-size: 8px; color: rgb(176, 176, 176); font-weight: normal; font-family: &quot;Liberation Sans&quot;, sans-serif; transform: scaleX(1.2);">Y</div>
<div class="a" style="left:990px;top:130px;width:31px;height:13px;background:#4f4f4f;"></div>
<div class="t" style="left: 993px; top: 132.5px; font-size: 8px; color: rgb(106, 106, 106); font-weight: normal; font-family: &quot;Liberation Sans&quot;, sans-serif; transform: scaleX(0.8);">0 px</div>
<svg style="left:907px;top:122px;" width="6" height="12" viewBox="0 0 6 12"><ellipse cx="3" cy="3" rx="2.2" ry="2.5" stroke="#c8c8c8" fill="none" stroke-width="1.1"></ellipse><ellipse cx="3" cy="9" rx="2.2" ry="2.5" stroke="#c8c8c8" fill="none" stroke-width="1.1"></ellipse></svg>
<div class="a" style="left:938px;top:150px;width:15px;height:17px;background:#3a3a3a;"></div>
<svg style="left:941px;top:153px;" width="9" height="11" viewBox="0 0 9 11"><rect x="0.5" y="0.5" width="8" height="10" stroke="#ccc" fill="none"></rect><circle cx="4.5" cy="3.5" r="1.3" fill="#ccc"></circle><rect x="2.5" y="5.5" width="4" height="5" fill="#ccc"></rect></svg>
<svg style="left:955px;top:152px;" width="12" height="11" viewBox="0 0 12 11"><rect x="0.5" y="0.5" width="11" height="9" stroke="#ccc" fill="none"></rect><circle cx="6" cy="3.5" r="1.3" fill="#ccc"></circle><rect x="3.5" y="5.5" width="5" height="4" fill="#ccc"></rect></svg>
<div class="t" style="left: 938px; top: 176.5px; font-size: 8px; color: rgb(200, 200, 200); font-weight: normal; font-family: &quot;Liberation Sans&quot;, sans-serif; transform: scaleX(0.778947);">Resolution: 250 pixels/inch</div>
<div class="t" style="left: 918px; top: 193.5px; font-size: 8px; color: rgb(189, 189, 189); font-weight: normal; font-family: &quot;Liberation Sans&quot;, sans-serif; transform: scaleX(0.8);">Mode</div>
<div class="a" style="left:939px;top:192px;width:82px;height:13px;background:#434343;"></div>
<div class="t" style="left: 943px; top: 194.5px; font-size: 8px; color: rgb(212, 212, 212); font-weight: normal; font-family: &quot;Liberation Sans&quot;, sans-serif; transform: scaleX(0.769231);">RGB Color</div>
<svg style="left:1013px;top:197px;" width="6" height="4" viewBox="0 0 6 4"><path d="M0.5 0.5 L3 3 L5.5 0.5" stroke="#aaa" fill="none" stroke-width="1"></path></svg>
<div class="a" style="left:939px;top:210px;width:82px;height:13px;background:#434343;"></div>
<div class="t" style="left: 943px; top: 212.5px; font-size: 8px; color: rgb(212, 212, 212); font-weight: normal; font-family: &quot;Liberation Sans&quot;, sans-serif; transform: scaleX(0.785714);">16 Bits/Channel</div>
<svg style="left:1013px;top:215px;" width="6" height="4" viewBox="0 0 6 4"><path d="M0.5 0.5 L3 3 L5.5 0.5" stroke="#aaa" fill="none" stroke-width="1"></path></svg>
<div class="a" style="left:953px;top:228px;width:68px;height:13px;background:#434343;"></div>
<div class="t" style="left: 957px; top: 230.5px; font-size: 8px; color: rgb(212, 212, 212); font-weight: normal; font-family: &quot;Liberation Sans&quot;, sans-serif; transform: scaleX(0.790698);">Transparent</div>
<svg style="left:1013px;top:233px;" width="6" height="4" viewBox="0 0 6 4"><path d="M0.5 0.5 L3 3 L5.5 0.5" stroke="#aaa" fill="none" stroke-width="1"></path></svg>
<div class="t" style="left: 925px; top: 230.5px; font-size: 8px; color: rgb(189, 189, 189); font-weight: normal; font-family: &quot;Liberation Sans&quot;, sans-serif; transform: scaleX(0.9);">Fill</div>
<div class="a" style="left:938px;top:228px;width:12px;height:12px;background:#535353;border:1px solid #3c3c3c"></div>
<div class="a" style="left:896px;top:246px;width:170px;height:1px;background:#444444;"></div>
<div class="a" style="left:896px;top:247px;width:170px;height:1px;background:#5a5a5a;"></div>
<svg style="left:900px;top:255px;" width="7" height="5" viewBox="0 0 7 5"><path d="M0.5 0.5 L3.5 3.5 L6.5 0.5" stroke="#aaa" fill="none" stroke-width="1"></path></svg>
<div class="t" style="left: 910px; top: 253.75px; font-size: 8.5px; color: rgb(230, 230, 230); font-weight: bold; font-family: &quot;Liberation Sans&quot;, sans-serif; transform: scaleX(0.75);">Rulers &amp; Grids</div>
<div class="a" style="left:903px;top:270px;width:15px;height:16px;background:#3a3a3a;"></div>
<svg style="left:905px;top:272px;" width="11" height="12" viewBox="0 0 11 12"><path d="M1 11 V1.5 H10.5" stroke="#d8d8d8" fill="none" stroke-width="2.5"></path></svg>
<svg style="left:925px;top:271px;" width="12" height="14" viewBox="0 0 12 14"><rect x="0.5" y="0.5" width="11" height="12" stroke="#c8c8c8" fill="none"></rect><path d="M4.2 0.5V12.5M7.8 0.5V12.5M0.5 4.5H11.5M0.5 8.5H11.5" stroke="#c8c8c8" stroke-width="0.9"></path></svg>
<svg style="left:946px;top:271px;" width="11" height="14" viewBox="0 0 11 14"><rect x="0.5" y="0.5" width="10" height="12" stroke="#c8c8c8" fill="none" stroke-dasharray="1.5 1"></rect><rect x="2.5" y="3" width="6" height="7" fill="#7a7a7a"></rect></svg>
<div class="a" style="left:975px;top:272px;width:46px;height:13px;background:#434343;"></div>
<div class="t" style="left: 979px; top: 274.5px; font-size: 8px; color: rgb(212, 212, 212); font-weight: normal; font-family: &quot;Liberation Sans&quot;, sans-serif; transform: scaleX(0.761905);">Pixels</div>
<svg style="left:1013px;top:277px;" width="6" height="4" viewBox="0 0 6 4"><path d="M0.5 0.5 L3 3 L5.5 0.5" stroke="#aaa" fill="none" stroke-width="1"></path></svg>
<div class="a" style="left:896px;top:293px;width:170px;height:1px;background:#444444;"></div>
<div class="a" style="left:896px;top:294px;width:170px;height:1px;background:#5a5a5a;"></div>
<svg style="left:900px;top:302px;" width="7" height="5" viewBox="0 0 7 5"><path d="M0.5 0.5 L3.5 3.5 L6.5 0.5" stroke="#aaa" fill="none" stroke-width="1"></path></svg>
<div class="t" style="left: 910px; top: 300.75px; font-size: 8.5px; color: rgb(230, 230, 230); font-weight: bold; font-family: &quot;Liberation Sans&quot;, sans-serif; transform: scaleX(0.689655);">Guides</div>
<div class="a" style="left:903px;top:317px;width:15px;height:17px;background:#353535;"></div>
<svg style="left:905px;top:319px;" width="11" height="13" viewBox="0 0 11 13"><path d="M3.5 0V13 M0 4.5H11 M0 8.5H11" stroke="#d0d0d0" stroke-width="1"></path></svg>
<svg style="left:925px;top:319px;" width="12" height="13" viewBox="0 0 12 13"><path d="M3.5 0V13 M0 4.5H8 M0 8.5H8" stroke="#c8c8c8" stroke-width="1"></path><rect x="6.5" y="8" width="5" height="4.5" fill="#c8c8c8"></rect></svg>
<div class="a" style="left:944px;top:317px;width:15px;height:17px;background:#353535;"></div>
<svg style="left:946px;top:319px;" width="12" height="13" viewBox="0 0 12 13"><path d="M3.5 0V13 M0 4.5H6" stroke="#d0d0d0" stroke-width="1"></path><path d="M7 5 L9 10 L11 5" stroke="#d0d0d0" fill="none" stroke-width="1"></path></svg>
<div class="a" style="left:975px;top:319px;width:46px;height:13px;background:#434343;"></div>
<div class="a" style="left:980px;top:325px;width:27px;height:1.5px;background:#d0d0d0;"></div>
<svg style="left:1013px;top:324px;" width="6" height="4" viewBox="0 0 6 4"><path d="M0.5 0.5 L3 3 L5.5 0.5" stroke="#aaa" fill="none" stroke-width="1"></path></svg>
<div class="a" style="left:896px;top:341px;width:170px;height:1px;background:#444444;"></div>
<div class="a" style="left:896px;top:342px;width:170px;height:1px;background:#5a5a5a;"></div>
<svg style="left:900px;top:349px;" width="7" height="5" viewBox="0 0 7 5"><path d="M0.5 0.5 L3.5 3.5 L6.5 0.5" stroke="#aaa" fill="none" stroke-width="1"></path></svg>
<div class="t" style="left: 911px; top: 348.25px; font-size: 8.5px; color: rgb(230, 230, 230); font-weight: bold; font-family: &quot;Liberation Sans&quot;, sans-serif; transform: scaleX(0.736842);">Quick Actions</div>
<div class="a" style="left:1066px;top:95px;width:9px;height:272px;background:#474747;"></div>
<div class="a" style="left:1067px;top:104px;width:7px;height:223px;background:#5e5e5e;border-radius:1px"></div>
<svg style="left:1067px;top:97px;" width="7" height="4" viewBox="0 0 7 4"><path d="M0.5 3.5 L3.5 0.5 L6.5 3.5" stroke="#888" fill="none" stroke-width="1"></path></svg>
<svg style="left:1067px;top:359px;" width="7" height="4" viewBox="0 0 7 4"><path d="M0.5 0.5 L3.5 3.5 L6.5 0.5" stroke="#888" fill="none" stroke-width="1"></path></svg>
<div class="a" style="left:896px;top:367px;width:184px;height:19px;background:#535353;"></div>
<div class="a" style="left:896px;top:382px;width:184px;height:4px;background:#424242;"></div>
<div class="a" style="left:896px;top:386px;width:179px;height:21px;background:#424242;"></div>
<div class="a" style="left:896px;top:387px;width:31px;height:20px;background:#535353;"></div>
<div class="t" style="left: 900px; top: 392.75px; font-size: 8.5px; color: rgb(240, 240, 240); font-weight: bold; font-family: &quot;Liberation Sans&quot;, sans-serif; transform: scaleX(0.851852);">Layers</div>
<div class="a" style="left:1049px;top:386px;width:26px;height:20px;background:#3e3e3e;"></div>
<svg style="left:1065px;top:394px;" width="7" height="6" viewBox="0 0 7 6"><path d="M0 0.5H7M0 3H7M0 5.5H7" stroke="#b0b0b0" stroke-width="1.1"></path></svg>
<div class="a" style="left:899px;top:413px;width:53px;height:13px;background:#464646;"></div>
<svg style="left:902px;top:415px;" width="8" height="9" viewBox="0 0 8 9"><circle cx="3.3" cy="3.3" r="2.5" stroke="#d0d0d0" fill="none" stroke-width="1.1"></circle><path d="M5 5 L7.5 8" stroke="#d0d0d0" stroke-width="1.3"></path></svg>
<div class="t" style="left: 912px; top: 415.5px; font-size: 8px; color: rgb(212, 212, 212); font-weight: normal; font-family: &quot;Liberation Sans&quot;, sans-serif; transform: scaleX(0.8125);">Kind</div>
<svg style="left:944px;top:418px;" width="6" height="4" viewBox="0 0 6 4"><path d="M0.5 0.5 L3 3 L5.5 0.5" stroke="#aaa" fill="none" stroke-width="1"></path></svg>
<svg style="left:959px;top:414px;" width="10" height="10" viewBox="0 0 10 10"><rect x="0.5" y="1" width="9" height="8" stroke="#c4c4c4" fill="none"></rect><path d="M1.5 8 L4 4.5 L6 6.5 L7 5.5 L8.5 8Z" fill="#c4c4c4"></path></svg>
<svg style="left:975px;top:414px;" width="10" height="10" viewBox="0 0 10 10"><circle cx="5" cy="5" r="4.3" stroke="#c4c4c4" fill="none" stroke-width="1"></circle><path d="M5 0.7 A4.3 4.3 0 0 1 5 9.3Z" fill="#c4c4c4"></path></svg>
<svg style="left:990px;top:414px;" width="9" height="10" viewBox="0 0 9 10"><path d="M0.5 1H8.5V2.8M0.5 1V2.8M4.5 1V9.5M3 9.5H6" stroke="#c4c4c4" fill="none" stroke-width="1.1"></path></svg>
<svg style="left:1005px;top:414px;" width="10" height="10" viewBox="0 0 10 10"><rect x="1.5" y="1.5" width="7" height="7" stroke="#c4c4c4" fill="none" stroke-width="0.9"></rect><rect x="0" y="0" width="2.5" height="2.5" fill="#c4c4c4"></rect><rect x="7.5" y="0" width="2.5" height="2.5" fill="#c4c4c4"></rect><rect x="0" y="7.5" width="2.5" height="2.5" fill="#c4c4c4"></rect><rect x="7.5" y="7.5" width="2.5" height="2.5" fill="#c4c4c4"></rect></svg>
<svg style="left:1019px;top:413px;" width="10" height="11" viewBox="0 0 10 11"><path d="M0.5 3.5 H3.5 L5 1 H9.5 V10.5 H0.5Z" stroke="#c4c4c4" fill="none" stroke-width="0.9"></path><rect x="2" y="5.5" width="5" height="4" fill="#c4c4c4"></rect></svg>
<svg style="left:1034px;top:411px;" width="8" height="12" viewBox="0 0 8 12"><circle cx="4" cy="4" r="3.3" fill="#e0e0e0"></circle><path d="M4 7.5V11" stroke="#9a9a9a" stroke-width="1"></path></svg>
<div class="a" style="left:896px;top:429px;width:179px;height:1px;background:#474747;"></div>
<div class="a" style="left:899px;top:432px;width:78px;height:14px;background:#505050;"></div>
<div class="t" style="left: 903px; top: 435px; font-size: 8px; color: rgb(125, 125, 125); font-weight: normal; font-family: &quot;Liberation Sans&quot;, sans-serif; transform: scaleX(0.807692);">Normal</div>
<div class="t" style="left: 983px; top: 435px; font-size: 8px; color: rgb(119, 119, 119); font-weight: normal; font-family: &quot;Liberation Sans&quot;, sans-serif; transform: scaleX(0.758621);">Opacity:</div>
<div class="a" style="left:1010px;top:432px;width:30px;height:13px;background:#4b4b4b;"></div>
<div class="t" style="left: 1013px; top: 434.5px; font-size: 8px; color: rgb(110, 110, 110); font-weight: normal; font-family: &quot;Liberation Sans&quot;, sans-serif; transform: scaleX(0.75);">100%</div>
<div class="a" style="left:1041px;top:432px;width:8px;height:13px;background:#4e4e4e;"></div>
<div class="a" style="left:896px;top:447px;width:179px;height:1px;background:#474747;"></div>
<div class="t" style="left: 900px; top: 455px; font-size: 8px; color: rgb(138, 138, 138); font-weight: normal; font-family: &quot;Liberation Sans&quot;, sans-serif; transform: scaleX(0.736842);">Lock:</div>
<svg style="left:920px;top:454px;" width="9" height="11" viewBox="0 0 9 11"><path d="M0 0H3V3H0ZM6 0H9V3H6ZM3 3H6V6H3ZM0 6H3V9H0ZM6 6H9V9H6Z" fill="#959595"></path></svg>
<svg style="left:933px;top:452px;" width="10" height="12" viewBox="0 0 10 12"><path d="M9 0.5 L4 7" stroke="#959595" stroke-width="1.5"></path><path d="M3.5 6.5 Q0.8 7 0.8 11 Q3.5 11 4.5 7.5Z" fill="#959595"></path></svg>
<svg style="left:946px;top:452px;" width="11" height="12" viewBox="0 0 11 12"><path d="M5.5 0.5V11.5M0 6H11" stroke="#959595" stroke-width="1"></path><path d="M5.5 0 L4 2 H7Z M5.5 12 L4 10 H7Z M0 6 L2 4.5 V7.5Z M11 6 L9 4.5 V7.5Z" fill="#959595"></path></svg>
<svg style="left:960px;top:452px;" width="11" height="12" viewBox="0 0 11 12"><path d="M2.5 0V9.5H11M0 2.5H8.5V12" stroke="#959595" fill="none" stroke-width="1"></path></svg>
<svg style="left:974px;top:452px;" width="10" height="12" viewBox="0 0 10 12"><path d="M2.5 5.5V3.5Q2.5 0.8 5 0.8Q7.5 0.8 7.5 3.5V5.5" stroke="#959595" fill="none" stroke-width="1.2"></path><rect x="1" y="5.5" width="8" height="6" fill="#959595"></rect></svg>
<div class="t" style="left: 997px; top: 455px; font-size: 8px; color: rgb(119, 119, 119); font-weight: normal; font-family: &quot;Liberation Sans&quot;, sans-serif; transform: scaleX(0.916667);">Fill:</div>
<div class="a" style="left:1011px;top:453px;width:29px;height:13px;background:#4b4b4b;"></div>
<div class="t" style="left: 1014px; top: 455.5px; font-size: 8px; color: rgb(110, 110, 110); font-weight: normal; font-family: &quot;Liberation Sans&quot;, sans-serif; transform: scaleX(0.75);">100%</div>
<div class="a" style="left:1041px;top:453px;width:8px;height:13px;background:#4e4e4e;"></div>
<div class="a" style="left:896px;top:464px;width:170px;height:1px;background:#474747;"></div>
<div class="a" style="left:915px;top:488px;width:151px;height:1px;background:#474747;"></div>
<svg style="left:901px;top:475.0px;" width="10" height="7" viewBox="0 0 10 7"><path d="M0.5 3.5 Q5 -1 9.5 3.5 Q5 8 0.5 3.5Z" stroke="#bdbdbd" fill="none" stroke-width="1"></path><circle cx="5" cy="3.5" r="1.5" fill="#bdbdbd"></circle></svg>
<svg style="left:927px;top:476.5px;" width="6" height="4" viewBox="0 0 6 4"><path d="M0.5 0.5 L3 3 L5.5 0.5" stroke="#aaa" fill="none" stroke-width="1"></path></svg>
<svg style="left:934px;top:473.5px;" width="11" height="9" viewBox="0 0 11 9"><path d="M0 0.5 H4 L5 2 H11 V9 H0Z" fill="#d8d8d8"></path><rect x="1" y="3" width="9" height="1" fill="#535353"></rect></svg>
<div class="t" style="left: 951px; top: 474.5px; font-size: 8px; color: rgb(222, 222, 222); font-weight: normal; font-family: &quot;Liberation Sans&quot;, sans-serif; transform: scaleX(0.78125);">adite text</div>
<div class="a" style="left:915px;top:515px;width:151px;height:1px;background:#474747;"></div>
<svg style="left:901px;top:497.5px;" width="10" height="7" viewBox="0 0 10 7"><path d="M0.5 3.5 Q5 -1 9.5 3.5 Q5 8 0.5 3.5Z" stroke="#bdbdbd" fill="none" stroke-width="1"></path><circle cx="5" cy="3.5" r="1.5" fill="#bdbdbd"></circle></svg>
<svg style="left:942px;top:495px;" width="10" height="12" viewBox="0 0 10 12"><path d="M0.8 0.8H9.2V3M0.8 0.8V3M5 0.8V11M3 11H7" stroke="#dedede" fill="none" stroke-width="1.3"></path></svg>
<div class="t" style="left: 963px; top: 497px; font-size: 8px; color: rgb(222, 222, 222); font-weight: normal; font-family: &quot;Liberation Sans&quot;, sans-serif; transform: scaleX(0.740741);">Layer 2</div>
<div class="a" style="left:915px;top:545px;width:151px;height:1px;background:#474747;"></div>
<svg style="left:901px;top:526.5px;" width="10" height="7" viewBox="0 0 10 7"><path d="M0.5 3.5 Q5 -1 9.5 3.5 Q5 8 0.5 3.5Z" stroke="#bdbdbd" fill="none" stroke-width="1"></path><circle cx="5" cy="3.5" r="1.5" fill="#bdbdbd"></circle></svg>
<div class="a checker" style="left:938px;top:519px;width:16px;height:21px;background-size:6px 6px;border:1px solid #eee"></div>
<svg style="left:940px;top:521px;" width="5" height="6" viewBox="0 0 5 6"><path d="M0.5 0.5H4.5M2.5 0.5V5.5" stroke="#333" stroke-width="1"></path></svg>
<div class="t" style="left: 959px; top: 526px; font-size: 8px; color: rgb(222, 222, 222); font-weight: normal; font-family: &quot;Liberation Sans&quot;, sans-serif; transform: scaleX(0.740741);">Layer 3</div>
<div class="a" style="left:915px;top:572px;width:151px;height:1px;background:#474747;"></div>
<svg style="left:901px;top:555.0px;" width="10" height="7" viewBox="0 0 10 7"><path d="M0.5 3.5 Q5 -1 9.5 3.5 Q5 8 0.5 3.5Z" stroke="#bdbdbd" fill="none" stroke-width="1"></path><circle cx="5" cy="3.5" r="1.5" fill="#bdbdbd"></circle></svg>
<svg style="left:942px;top:552.5px;" width="10" height="12" viewBox="0 0 10 12"><path d="M0.8 0.8H9.2V3M0.8 0.8V3M5 0.8V11M3 11H7" stroke="#dedede" fill="none" stroke-width="1.3"></path></svg>
<div class="t" style="left: 963px; top: 554.5px; font-size: 8px; color: rgb(222, 222, 222); font-weight: normal; font-family: &quot;Liberation Sans&quot;, sans-serif; transform: scaleX(0.780952);">cilla0000000...&lt;&lt;&lt;&lt;&lt;&lt;&lt;&lt;&lt;0 d</div>
<div class="a" style="left:915px;top:600px;width:151px;height:1px;background:#474747;"></div>
<div class="a" style="left:901px;top:582px;width:10px;height:10px;background:#535353;border:1px solid #4a4a4a"></div>
<svg style="left:942px;top:581px;" width="10" height="12" viewBox="0 0 10 12"><path d="M0.8 0.8H9.2V3M0.8 0.8V3M5 0.8V11M3 11H7" stroke="#dedede" fill="none" stroke-width="1.3"></path></svg>
<div class="t" style="left: 963px; top: 583px; font-size: 8px; color: rgb(222, 222, 222); font-weight: normal; font-family: &quot;Liberation Sans&quot;, sans-serif; transform: scaleX(0.769231);">1aa</div>
<div class="a" style="left:915px;top:629px;width:151px;height:1px;background:#474747;"></div>
<svg style="left:901px;top:611.0px;" width="10" height="7" viewBox="0 0 10 7"><path d="M0.5 3.5 Q5 -1 9.5 3.5 Q5 8 0.5 3.5Z" stroke="#bdbdbd" fill="none" stroke-width="1"></path><circle cx="5" cy="3.5" r="1.5" fill="#bdbdbd"></circle></svg>
<svg style="left:942px;top:608.5px;" width="10" height="12" viewBox="0 0 10 12"><path d="M0.8 0.8H9.2V3M0.8 0.8V3M5 0.8V11M3 11H7" stroke="#dedede" fill="none" stroke-width="1.3"></path></svg>
<div class="t" style="left: 963px; top: 610.5px; font-size: 8px; color: rgb(222, 222, 222); font-weight: normal; font-family: &quot;Liberation Sans&quot;, sans-serif; transform: scaleX(0.692308);">169</div>
<div class="a" style="left:915px;top:658px;width:151px;height:1px;background:#474747;"></div>
<svg style="left:901px;top:640.5px;" width="10" height="7" viewBox="0 0 10 7"><path d="M0.5 3.5 Q5 -1 9.5 3.5 Q5 8 0.5 3.5Z" stroke="#bdbdbd" fill="none" stroke-width="1"></path><circle cx="5" cy="3.5" r="1.5" fill="#bdbdbd"></circle></svg>
<svg style="left:942px;top:638px;" width="10" height="12" viewBox="0 0 10 12"><path d="M0.8 0.8H9.2V3M0.8 0.8V3M5 0.8V11M3 11H7" stroke="#dedede" fill="none" stroke-width="1.3"></path></svg>
<div class="t" style="left: 963px; top: 640px; font-size: 8px; color: rgb(222, 222, 222); font-weight: normal; font-family: &quot;Liberation Sans&quot;, sans-serif; transform: scaleX(0.714286);">m</div>
<div class="a" style="left:915px;top:688px;width:151px;height:1px;background:#474747;"></div>
<svg style="left:901px;top:669.5px;" width="10" height="7" viewBox="0 0 10 7"><path d="M0.5 3.5 Q5 -1 9.5 3.5 Q5 8 0.5 3.5Z" stroke="#bdbdbd" fill="none" stroke-width="1"></path><circle cx="5" cy="3.5" r="1.5" fill="#bdbdbd"></circle></svg>
<svg style="left:942px;top:667px;" width="10" height="12" viewBox="0 0 10 12"><path d="M0.8 0.8H9.2V3M0.8 0.8V3M5 0.8V11M3 11H7" stroke="#dedede" fill="none" stroke-width="1.3"></path></svg>
<div class="t" style="left: 963px; top: 669px; font-size: 8px; color: rgb(222, 222, 222); font-weight: normal; font-family: &quot;Liberation Sans&quot;, sans-serif; transform: scaleX(0.818182);">125 ...</div>
<div class="a" style="left:915px;top:704px;width:151px;height:1px;background:#474747;"></div>
<svg style="left:901px;top:697.0px;" width="10" height="7" viewBox="0 0 10 7"><path d="M0.5 3.5 Q5 -1 9.5 3.5 Q5 8 0.5 3.5Z" stroke="#bdbdbd" fill="none" stroke-width="1"></path><circle cx="5" cy="3.5" r="1.5" fill="#bdbdbd"></circle></svg>
<svg style="left:942px;top:694.5px;" width="10" height="12" viewBox="0 0 10 12"><path d="M0.8 0.8H9.2V3M0.8 0.8V3M5 0.8V11M3 11H7" stroke="#dedede" fill="none" stroke-width="1.3"></path></svg>
<div class="t" style="left: 963px; top: 696.5px; font-size: 8px; color: rgb(222, 222, 222); font-weight: normal; font-family: &quot;Liberation Sans&quot;, sans-serif; transform: scaleX(0.725);">01.01.1990</div>
<div class="a" style="left:914px;top:465px;width:1px;height:239px;background:#4a4a4a;"></div>
<div class="a" style="left:1066px;top:469px;width:9px;height:245px;background:#474747;"></div>
<div class="a" style="left:1067px;top:490px;width:7px;height:66px;background:#5e5e5e;"></div>
<svg style="left:1067px;top:472px;" width="7" height="4" viewBox="0 0 7 4"><path d="M0.5 3.5 L3.5 0.5 L6.5 3.5" stroke="#888" fill="none" stroke-width="1"></path></svg>
<div class="a" style="left:896px;top:704px;width:179px;height:16px;background:#535353;"></div>
<svg style="left:948px;top:711px;" width="11" height="7" viewBox="0 0 11 7"><rect x="0.5" y="1" width="5" height="5" rx="2.5" stroke="#b8b8b8" fill="none"></rect><rect x="5" y="1" width="5.5" height="5" rx="2.5" stroke="#b8b8b8" fill="none"></rect></svg>
<div class="t" style="left: 965px; top: 710px; font-size: 9px; color: rgb(184, 184, 184); font-weight: normal; font-family: &quot;Liberation Sans&quot;, sans-serif; font-style: italic; transform: scaleX(1.28571);">fx</div>
<svg style="left:981px;top:709px;" width="11" height="10" viewBox="0 0 11 10"><rect x="0.5" y="0.5" width="10" height="9" stroke="#b8b8b8" fill="none"></rect><circle cx="5.5" cy="5" r="3" fill="#b8b8b8"></circle></svg>
<svg style="left:998px;top:709px;" width="11" height="11" viewBox="0 0 11 11"><circle cx="5.5" cy="5.5" r="4.8" stroke="#b8b8b8" fill="none"></circle><path d="M5.5 0.7 A4.8 4.8 0 0 1 5.5 10.3Z" fill="#b8b8b8"></path></svg>
<svg style="left:1014px;top:709px;" width="12" height="10" viewBox="0 0 12 10"><path d="M0 0.5 H4.5 L5.5 2 H12 V10 H0Z" fill="#b8b8b8"></path></svg>
<svg style="left:1031px;top:708px;" width="11" height="12" viewBox="0 0 11 12"><rect x="0.5" y="0.5" width="10" height="11" stroke="#b8b8b8" fill="none"></rect><path d="M5.5 3V9M2.5 6H8.5" stroke="#b8b8b8" stroke-width="1"></path></svg>
<svg style="left:1049px;top:708px;" width="10" height="12" viewBox="0 0 10 12"><path d="M0 1.5H10M3.5 1.5V0.5H6.5V1.5M1.5 2.5 L2 11.5 H8 L8.5 2.5" stroke="#b8b8b8" fill="none" stroke-width="1"></path></svg>
<div class="a" style="left:57px;top:711px;width:115px;height:9px;background:#4b4b4b;"></div>
<div class="t" style="left: 29px; top: 711.5px; font-size: 8px; color: rgb(208, 208, 208); font-weight: normal; font-family: &quot;Liberation Sans&quot;, sans-serif; transform: scaleX(0.666667);">20.66%</div>
<div class="t" style="left: 70px; top: 711.5px; font-size: 8px; color: rgb(184, 184, 184); font-weight: normal; font-family: &quot;Liberation Sans&quot;, sans-serif; transform: scaleX(0.777778);">2232 px x 2854 px (250 ppi)</div>
<div class="t" style="left: 165px; top: 711px; font-size: 9px; color: rgb(187, 187, 187); font-weight: normal; font-family: &quot;Liberation Sans&quot;, sans-serif; transform: scaleX(1);">›</div>
<svg style="left:0;top:0" width="1080" height="720" viewBox="0 0 1080 720"><g stroke="#1d1d1d" stroke-width="2.3" fill="none" stroke-linejoin="miter"><path d="M871.8 668 H859 V695.8 H871.8 M859 681.5 H871"></path><path d="M878.3 667 V697 M892.5 667 L879 683.5 M883.5 678 L893.5 697"></path><ellipse cx="907.4" cy="681.8" rx="10" ry="14.6"></ellipse><path d="M942 671 Q939 667 934 667 Q924.5 667 924.5 682 Q924.5 696.8 934 696.8 Q939.5 696.8 942 694.5 V681.5 H935.5"></path><path d="M961.9 668 H950.8 V695.8 H961.9 M950.8 681.5 H960.5"></path><path d="M967.3 697 L976.8 667 L986.3 697 M970.5 686.5 H983"></path></g><circle cx="993" cy="695.3" r="1.6" fill="#1d1d1d"></circle><g stroke="#789c1c" stroke-width="2.9" fill="none"><ellipse cx="1010" cy="681.7" rx="10" ry="15"></ellipse><path d="M1027.8 697.5 V667.5 H1034 Q1041.5 667.5 1041.5 675 Q1041.5 682.8 1034 682.8 H1028 M1034.5 682.8 L1042.5 697.5"></path><path d="M1066 670.5 Q1063 666.8 1057.5 666.8 Q1048.8 666.8 1048.8 682 Q1048.8 697 1057.5 697 Q1063.5 697 1066.3 694.5 V682 H1058.5"></path></g></svg>
<svg style="left:942px;top:667px;" width="10" height="12" viewBox="0 0 10 12"><path d="M0.8 0.8H9.2V3M0.8 0.8V3M5 0.8V11M3 11H7" stroke="#dedede" fill="none" stroke-width="1.3"></path></svg>
<div class="t" style="left: 963px; top: 669px; font-size: 8px; color: rgb(232, 232, 232); font-weight: normal; font-family: &quot;Liberation Sans&quot;, sans-serif; transform: scaleX(0.818182);">125 ...</div>
<svg style="left:942px;top:694.5px;" width="10" height="12" viewBox="0 0 10 12"><path d="M0.8 0.8H9.2V3M0.8 0.8V3M5 0.8V11M3 11H7" stroke="#dedede" fill="none" stroke-width="1.3"></path></svg>
<div class="t" style="left: 963px; top: 696.5px; font-size: 8px; color: rgb(232, 232, 232); font-weight: normal; font-family: &quot;Liberation Sans&quot;, sans-serif; transform: scaleX(0.725);">01.01.1990</div>

</body></html>
